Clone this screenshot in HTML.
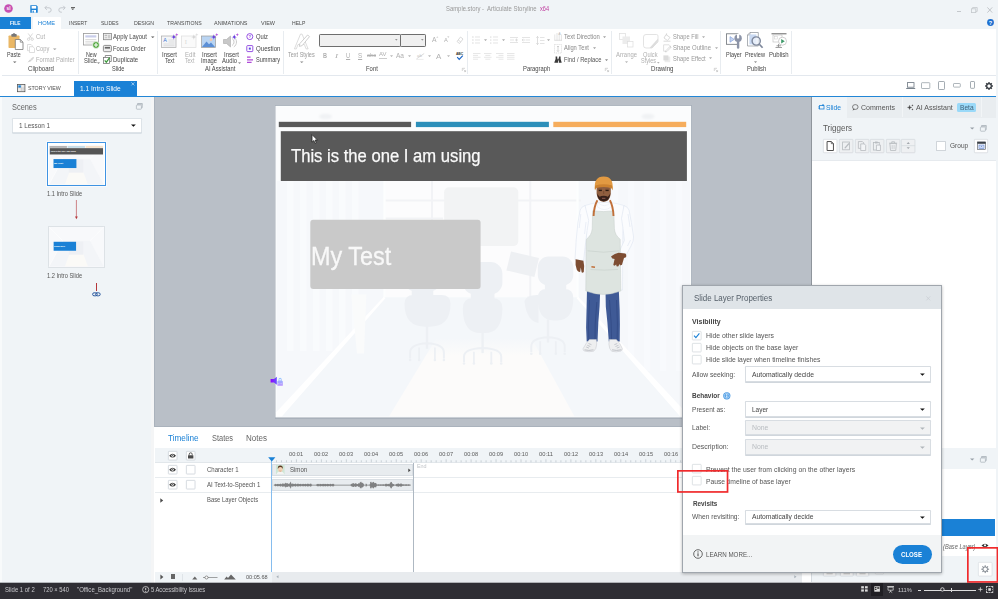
<!DOCTYPE html>
<html><head><meta charset="utf-8"><title>Sample.story - Articulate Storyline</title>
<style>
*{box-sizing:border-box;margin:0;padding:0}
html,body{width:998px;height:599px;overflow:hidden;background:#fff}
body{position:relative;font-family:"Liberation Sans",sans-serif;font-size:6.6px;color:#555;line-height:1}
.a{position:absolute}
.t{position:absolute;white-space:nowrap;line-height:1;transform-origin:0 50%}
svg{overflow:visible}
</style></head><body>
<div class="a" style="left:0px;top:0px;width:998px;height:28.5px;background:#f0f4f7;"></div>
<div class="a" style="left:0px;top:28.5px;width:996px;height:46.5px;background:#fff;"></div>
<div class="a" style="left:2px;top:75px;width:994px;height:1px;background:#e3e8ee;"></div>
<div class="a" style="left:0px;top:76px;width:996px;height:20px;background:#fff;"></div>
<div class="a" style="left:996px;top:28px;width:2px;height:555px;background:#f0f4f7;"></div>
<div class="a" style="left:0px;top:95.6px;width:996px;height:1.5px;background:#2286d6;"></div>
<div class="a" style="left:0px;top:97.1px;width:151px;height:486px;background:#f0f4f7;"></div>
<div class="a" style="left:151px;top:97.1px;width:3.3px;height:486px;background:#f4f5f6;"></div>
<div class="a" style="left:154.3px;top:97.1px;width:657.2px;height:329.6px;background:#aab2bc;"></div>
<div class="a" style="left:155.3px;top:97.1px;width:656.2px;height:328.6px;background:#b9bfc7;"></div>
<div class="a" style="left:154.5px;top:426.7px;width:657px;height:156px;background:#fff;"></div>
<div class="a" style="left:811.5px;top:97.2px;width:184.5px;height:486px;background:#fff;"></div>
<div class="a" style="left:0px;top:583px;width:998px;height:16px;background:#2f2e34;"></div>
<svg class="a" style="left:4px;top:4px;" width="9" height="9" viewBox="0 0 9 9"><circle cx="4.5" cy="4.5" r="4.3" fill="#c650b2"/><text x="4.5" y="6.3" font-size="4.6" fill="#fff" text-anchor="middle" font-family="Liberation Sans,sans-serif" font-weight="bold">sl</text></svg>
<svg class="a" style="left:30px;top:4.5px;" width="8" height="8" viewBox="0 0 8 8"><path d="M0.3 0.3h6.2l1.2 1.2v6.2h-7.4z" fill="#1a81d6"/><rect x="1.6" y="1" width="4.6" height="2.6" fill="#fff"/><rect x="1.8" y="5" width="4.2" height="2.7" fill="#fff"/><rect x="2.6" y="5.6" width="1.2" height="2.1" fill="#1a81d6"/></svg>
<svg class="a" style="left:44px;top:5px;" width="8" height="8" viewBox="0 0 8 8"><path d="M1 2.8 H5 A2.2 2.2 0 0 1 5 7.2 H4.2" fill="none" stroke="#bfc4c9" stroke-width="0.9"/><path d="M2.8 0.8 L0.8 2.8 L2.8 4.8" fill="none" stroke="#bfc4c9" stroke-width="0.9"/></svg>
<svg class="a" style="left:57.5px;top:5px;" width="8" height="8" viewBox="0 0 8 8"><path d="M7 2.8 H3 A2.2 2.2 0 0 0 3 7.2 H3.8" fill="none" stroke="#bfc4c9" stroke-width="0.9"/><path d="M5.2 0.8 L7.2 2.8 L5.2 4.8" fill="none" stroke="#bfc4c9" stroke-width="0.9"/></svg>
<div class="a" style="left:71.3px;top:6.7px;width:3.4px;height:0.7px;background:#666;"></div>
<svg class="a" style="left:71.24px;top:8.180000000000001px;" width="3.5200000000000005" height="2.2399999999999998" viewBox="0 0 3.5200000000000005 2.2399999999999998"><path d="M0 0.44799999999999995 L3.5200000000000005 0.44799999999999995 L1.7600000000000002 2.016 Z" fill="#555"/></svg>
<span class="t" style="left:446.00px;top:5.78px;font-size:6.4px;color:#999;transform:scaleX(0.9210);">Sample.story -</span>
<span class="t" style="left:487.00px;top:5.78px;font-size:6.4px;color:#999;transform:scaleX(0.9314);">Articulate Storyline</span>
<span class="t" style="left:540.00px;top:5.78px;font-size:6.4px;color:#c040a0;transform:scaleX(0.8722);">x64</span>
<div class="a" style="left:956.5px;top:11.2px;width:4.5px;height:0.8px;background:#c4c8cc;"></div>
<svg class="a" style="left:970.5px;top:6.5px;" width="7" height="7" viewBox="0 0 7 7"><rect x="0.4" y="1.8" width="4.4" height="3.8" fill="none" stroke="#c4c8cc" stroke-width="0.8"/><path d="M1.6 1.8V0.5H6.2V4.4H4.8" fill="none" stroke="#c4c8cc" stroke-width="0.8"/></svg>
<svg class="a" style="left:986.5px;top:6.5px;" width="6" height="6" viewBox="0 0 6 6"><path d="M0.4 0.4L5.2 5.6M5.2 0.4L0.4 5.6" stroke="#bcc0c4" stroke-width="0.9"/></svg>
<svg class="a" style="left:987px;top:18.8px;" width="7" height="7" viewBox="0 0 7 7"><circle cx="3.5" cy="3.5" r="3.4" fill="#1d6fd0"/><text x="3.5" y="5.6" font-size="5.6" font-weight="bold" fill="#fff" text-anchor="middle" font-family="Liberation Sans,sans-serif">?</text></svg>
<div class="a" style="left:0px;top:17px;width:30.5px;height:11.5px;background:#1a81d6;"></div>
<span class="t" style="left:9.70px;top:20.81px;font-size:5.9px;color:#fff;font-weight:bold;transform:scaleX(0.8214);">FILE</span>
<div class="a" style="left:32.6px;top:17.3px;width:28.6px;height:11.5px;background:#fff;border-radius:1px 1px 0 0;"></div>
<span class="t" style="left:37.80px;top:20.81px;font-size:5.9px;color:#1a81d6;transform:scaleX(0.9717);">HOME</span>
<span class="t" style="left:69.00px;top:20.81px;font-size:5.9px;color:#4a4a4a;transform:scaleX(0.8454);">INSERT</span>
<span class="t" style="left:101.30px;top:20.81px;font-size:5.9px;color:#4a4a4a;transform:scaleX(0.8433);">SLIDES</span>
<span class="t" style="left:134.00px;top:20.81px;font-size:5.9px;color:#4a4a4a;transform:scaleX(0.8930);">DESIGN</span>
<span class="t" style="left:166.70px;top:20.81px;font-size:5.9px;color:#4a4a4a;transform:scaleX(0.8774);">TRANSITIONS</span>
<span class="t" style="left:213.50px;top:20.81px;font-size:5.9px;color:#4a4a4a;transform:scaleX(0.9235);">ANIMATIONS</span>
<span class="t" style="left:261.30px;top:20.81px;font-size:5.9px;color:#4a4a4a;transform:scaleX(0.9285);">VIEW</span>
<span class="t" style="left:291.50px;top:20.81px;font-size:5.9px;color:#4a4a4a;transform:scaleX(0.8629);">HELP</span>
<div class="a" style="left:77.7px;top:31px;width:0.8px;height:42.5px;background:#e8ecf0;"></div>
<div class="a" style="left:156.5px;top:31px;width:0.8px;height:42.5px;background:#e8ecf0;"></div>
<div class="a" style="left:283px;top:31px;width:0.8px;height:42.5px;background:#e8ecf0;"></div>
<div class="a" style="left:466.7px;top:31px;width:0.8px;height:42.5px;background:#e8ecf0;"></div>
<div class="a" style="left:610.8px;top:31px;width:0.8px;height:42.5px;background:#e8ecf0;"></div>
<div class="a" style="left:720px;top:31px;width:0.8px;height:42.5px;background:#e8ecf0;"></div>
<div class="a" style="left:791.3px;top:31px;width:0.8px;height:42.5px;background:#e8ecf0;"></div>
<span class="t" style="left:28.00px;top:66.47px;font-size:6.3px;color:#464646;transform:scaleX(0.9641);">Clipboard</span>
<span class="t" style="left:111.80px;top:66.47px;font-size:6.3px;color:#464646;transform:scaleX(0.8922);">Slide</span>
<span class="t" style="left:205.30px;top:66.47px;font-size:6.3px;color:#464646;transform:scaleX(0.9266);">AI Assistant</span>
<span class="t" style="left:366.20px;top:66.47px;font-size:6.3px;color:#464646;transform:scaleX(0.9360);">Font</span>
<span class="t" style="left:522.50px;top:66.47px;font-size:6.3px;color:#464646;transform:scaleX(0.9279);">Paragraph</span>
<span class="t" style="left:651.30px;top:66.47px;font-size:6.3px;color:#464646;transform:scaleX(0.9736);">Drawing</span>
<span class="t" style="left:747.00px;top:66.47px;font-size:6.3px;color:#464646;transform:scaleX(0.9340);">Publish</span>
<svg class="a" style="left:461.5px;top:68px;" width="4" height="4" viewBox="0 0 4 4"><path d="M0.3 3V0.3H3" fill="none" stroke="#bbb" stroke-width="0.6"/><path d="M1.5 1.5L3.6 3.6M3.6 2V3.6H2" fill="none" stroke="#bbb" stroke-width="0.6"/></svg>
<svg class="a" style="left:605px;top:68px;" width="4" height="4" viewBox="0 0 4 4"><path d="M0.3 3V0.3H3" fill="none" stroke="#bbb" stroke-width="0.6"/><path d="M1.5 1.5L3.6 3.6M3.6 2V3.6H2" fill="none" stroke="#bbb" stroke-width="0.6"/></svg>
<svg class="a" style="left:714px;top:68px;" width="4" height="4" viewBox="0 0 4 4"><path d="M0.3 3V0.3H3" fill="none" stroke="#bbb" stroke-width="0.6"/><path d="M1.5 1.5L3.6 3.6M3.6 2V3.6H2" fill="none" stroke="#bbb" stroke-width="0.6"/></svg>
<svg class="a" style="left:7.5px;top:32.5px;" width="16" height="17" viewBox="0 0 16 17"><rect x="0.5" y="2.5" width="11" height="12.5" rx="0.8" fill="#eab765"/><rect x="3.3" y="1" width="5.4" height="2.8" rx="0.7" fill="#777"/><rect x="4.8" y="0.2" width="2.4" height="1.6" rx="0.8" fill="#777"/><path d="M7.3 6.5h5l2.7 2.7v7.3h-7.7z" fill="#fff" stroke="#777" stroke-width="0.8"/><path d="M12.3 6.5v2.7h2.7" fill="none" stroke="#777" stroke-width="0.7"/></svg>
<span class="t" style="left:7.30px;top:52.07px;font-size:6.3px;color:#464646;transform:scaleX(0.8504);">Paste</span>
<svg class="a" style="left:12.540000000000001px;top:61.18px;" width="3.5200000000000005" height="2.2399999999999998" viewBox="0 0 3.5200000000000005 2.2399999999999998"><path d="M0 0.44799999999999995 L3.5200000000000005 0.44799999999999995 L1.7600000000000002 2.016 Z" fill="#666"/></svg>
<svg class="a" style="left:26.5px;top:33px;" width="7" height="8" viewBox="0 0 7 8"><path d="M1.2 0.5L4.6 5.2M5.6 0.5L2.2 5.2" stroke="#c8c8c8" stroke-width="0.7" fill="none"/><circle cx="1.6" cy="6.2" r="1.2" fill="none" stroke="#c8c8c8" stroke-width="0.7"/><circle cx="5.2" cy="6.2" r="1.2" fill="none" stroke="#c8c8c8" stroke-width="0.7"/></svg>
<span class="t" style="left:36.00px;top:34.27px;font-size:6.3px;color:#b0b0b0;transform:scaleX(0.9180);">Cut</span>
<svg class="a" style="left:26.5px;top:44px;" width="8" height="9" viewBox="0 0 8 9"><path d="M0.5 0.5h3.6l1.6 1.6v4.6h-5.2z" fill="#fff" stroke="#d0d0d0" stroke-width="0.7"/><path d="M2.5 2.7h3.4l1.6 1.6v4.2h-5z" fill="#fff" stroke="#d0d0d0" stroke-width="0.7"/></svg>
<span class="t" style="left:36.00px;top:45.87px;font-size:6.3px;color:#b0b0b0;transform:scaleX(0.9043);">Copy</span>
<svg class="a" style="left:52.54px;top:47.580000000000005px;" width="3.5200000000000005" height="2.2399999999999998" viewBox="0 0 3.5200000000000005 2.2399999999999998"><path d="M0 0.44799999999999995 L3.5200000000000005 0.44799999999999995 L1.7600000000000002 2.016 Z" fill="#999"/></svg>
<svg class="a" style="left:27px;top:55.5px;" width="8" height="8" viewBox="0 0 8 8"><path d="M0.5 6.5L3 3.5L4.5 5z" fill="#ccc"/><path d="M3.2 3.2L6.2 0.8L7.2 1.8L4.8 4.8z" fill="#d8d8d8"/></svg>
<span class="t" style="left:36.00px;top:56.87px;font-size:6.3px;color:#b0b0b0;transform:scaleX(0.9264);">Format Painter</span>
<svg class="a" style="left:83px;top:32.5px;" width="17" height="16" viewBox="0 0 17 16"><rect x="0.4" y="0.4" width="15" height="11.6" fill="#fff" stroke="#999" stroke-width="0.8"/><rect x="2.3" y="2.3" width="11" height="2.2" fill="#c9cdea"/><path d="M2.3 6.5h11M2.3 8.3h11M2.3 10h11" stroke="#c4c4c4" stroke-width="0.6"/><circle cx="13" cy="12" r="3.4" fill="#4ea53a" stroke="#fff" stroke-width="0.7"/><path d="M13 10v4M11 12h4" stroke="#fff" stroke-width="1.1"/></svg>
<span class="t" style="left:86.30px;top:52.07px;font-size:6.3px;color:#464646;transform:scaleX(0.8490);">New</span>
<span class="t" style="left:83.50px;top:57.97px;font-size:6.3px;color:#464646;transform:scaleX(0.9279);">Slide</span>
<svg class="a" style="left:97.25999999999999px;top:61.52px;" width="3.08" height="1.9599999999999997" viewBox="0 0 3.08 1.9599999999999997"><path d="M0 0.39199999999999996 L3.08 0.39199999999999996 L1.54 1.7639999999999998 Z" fill="#666"/></svg>
<svg class="a" style="left:103px;top:33px;" width="9" height="7.5" viewBox="0 0 9 7.5"><rect x="0.4" y="0.4" width="8" height="6.3" fill="#f4f4f4" stroke="#888" stroke-width="0.8"/><rect x="1.6" y="1.7" width="2.6" height="1.5" fill="#bbb"/><rect x="4.8" y="1.7" width="2.6" height="3.7" fill="#ccc"/><rect x="1.6" y="3.9" width="2.6" height="1.5" fill="#ccc"/></svg>
<span class="t" style="left:113.30px;top:34.27px;font-size:6.3px;color:#464646;transform:scaleX(0.9334);">Apply Layout</span>
<svg class="a" style="left:150.74px;top:35.580000000000005px;" width="3.5200000000000005" height="2.2399999999999998" viewBox="0 0 3.5200000000000005 2.2399999999999998"><path d="M0 0.44799999999999995 L3.5200000000000005 0.44799999999999995 L1.7600000000000002 2.016 Z" fill="#555"/></svg>
<svg class="a" style="left:103px;top:44.5px;" width="9" height="7.5" viewBox="0 0 9 7.5"><rect x="0.4" y="0.4" width="8" height="6.3" rx="1.2" fill="#eee" stroke="#777" stroke-width="0.8"/><rect x="1.8" y="1.9" width="5.2" height="1.7" fill="#666"/></svg>
<span class="t" style="left:113.30px;top:45.87px;font-size:6.3px;color:#464646;transform:scaleX(0.9340);">Focus Order</span>
<svg class="a" style="left:103px;top:55px;" width="9" height="9" viewBox="0 0 9 9"><rect x="0.4" y="2.4" width="6" height="6" fill="#fff" stroke="#777" stroke-width="0.8"/><path d="M2.3 2.2V0.5h6v6H6.6" fill="none" stroke="#777" stroke-width="0.8"/><path d="M1.7 5.4l1.6 1.8l3.4-4.6" fill="none" stroke="#3b9a3b" stroke-width="1.2"/></svg>
<span class="t" style="left:113.30px;top:56.87px;font-size:6.3px;color:#464646;transform:scaleX(0.9594);">Duplicate</span>
<svg class="a" style="left:161px;top:33px;" width="18" height="16" viewBox="0 0 18 16"><rect x="0.5" y="3" width="14.5" height="11.5" fill="#f4f5f7" stroke="#aaa" stroke-width="0.7"/><text x="2.2" y="9" font-size="5.4" fill="#3a6fd0" font-family="Liberation Sans,sans-serif">A</text><path d="M7.5 7h6M7.5 9h6M2.5 11h11M2.5 12.8h11" stroke="#ccc" stroke-width="0.6"/><path d="M12.8 0.8999999999999999Q12.8 4 15.9 4Q12.8 4 12.8 7.1Q12.8 4 9.700000000000001 4Q12.8 4 12.8 0.8999999999999999Z" fill="#6a3fe0"/><path d="M15.8 0.09999999999999987Q15.8 1.7 17.400000000000002 1.7Q15.8 1.7 15.8 3.3Q15.8 1.7 14.200000000000001 1.7Q15.8 1.7 15.8 0.09999999999999987Z" fill="#b04bd8"/></svg>
<span class="t" style="left:162.00px;top:52.07px;font-size:6.3px;color:#464646;transform:scaleX(0.9520);">Insert</span>
<span class="t" style="left:165.00px;top:57.97px;font-size:6.3px;color:#464646;transform:scaleX(0.8049);">Text</span>
<svg class="a" style="left:181px;top:33px;" width="18" height="16" viewBox="0 0 18 16"><rect x="0.5" y="3" width="14.5" height="11.5" fill="#fafafa" stroke="#ddd" stroke-width="0.7"/><text x="3.8" y="11" font-size="6.5" fill="#d8d8d8" font-family="Liberation Serif,serif">I</text><path d="M12.8 0.8999999999999999Q12.8 4 15.9 4Q12.8 4 12.8 7.1Q12.8 4 9.700000000000001 4Q12.8 4 12.8 0.8999999999999999Z" fill="#d5d5d5"/><path d="M15.8 0.09999999999999987Q15.8 1.7 17.400000000000002 1.7Q15.8 1.7 15.8 3.3Q15.8 1.7 14.200000000000001 1.7Q15.8 1.7 15.8 0.09999999999999987Z" fill="#ddd"/></svg>
<span class="t" style="left:184.50px;top:52.07px;font-size:6.3px;color:#b0b0b0;transform:scaleX(0.9672);">Edit</span>
<span class="t" style="left:184.70px;top:57.97px;font-size:6.3px;color:#b0b0b0;transform:scaleX(0.8049);">Text</span>
<svg class="a" style="left:201px;top:33px;" width="18" height="16" viewBox="0 0 18 16"><rect x="0.5" y="3" width="14" height="11.5" fill="#b9d4f2" stroke="#999" stroke-width="0.7"/><path d="M1 14L5.5 8.5L8 11.2L10 9.5L14 14z" fill="#5b8fd6"/><circle cx="10" cy="6.8" r="1.3" fill="#f6c9a8"/><path d="M12.8 0.8999999999999999Q12.8 4 15.9 4Q12.8 4 12.8 7.1Q12.8 4 9.700000000000001 4Q12.8 4 12.8 0.8999999999999999Z" fill="#6a3fe0"/><path d="M15.8 0.09999999999999987Q15.8 1.7 17.400000000000002 1.7Q15.8 1.7 15.8 3.3Q15.8 1.7 14.200000000000001 1.7Q15.8 1.7 15.8 0.09999999999999987Z" fill="#b04bd8"/></svg>
<span class="t" style="left:201.70px;top:52.07px;font-size:6.3px;color:#464646;transform:scaleX(0.9520);">Insert</span>
<span class="t" style="left:201.00px;top:57.97px;font-size:6.3px;color:#464646;transform:scaleX(0.9138);">Image</span>
<svg class="a" style="left:222px;top:33px;" width="18" height="16" viewBox="0 0 18 16"><path d="M1.5 6.5h3l4-3.5v11l-4-3.5h-3z" fill="#c8c8c8" stroke="#aaa" stroke-width="0.6"/><path d="M10 5.5a4 4 0 0 1 0 7M11.8 4a6 6 0 0 1 0 10" fill="none" stroke="#c4c4c4" stroke-width="0.9"/><path d="M12.3 0.8999999999999999Q12.3 4 15.4 4Q12.3 4 12.3 7.1Q12.3 4 9.200000000000001 4Q12.3 4 12.3 0.8999999999999999Z" fill="#6a3fe0"/><path d="M15.3 0.09999999999999987Q15.3 1.7 16.900000000000002 1.7Q15.3 1.7 15.3 3.3Q15.3 1.7 13.700000000000001 1.7Q15.3 1.7 15.3 0.09999999999999987Z" fill="#b04bd8"/></svg>
<span class="t" style="left:223.50px;top:52.07px;font-size:6.3px;color:#464646;transform:scaleX(0.9520);">Insert</span>
<span class="t" style="left:221.70px;top:57.97px;font-size:6.3px;color:#464646;transform:scaleX(0.9309);">Audio</span>
<svg class="a" style="left:238.46px;top:61.720000000000006px;" width="3.08" height="1.9599999999999997" viewBox="0 0 3.08 1.9599999999999997"><path d="M0 0.39199999999999996 L3.08 0.39199999999999996 L1.54 1.7639999999999998 Z" fill="#666"/></svg>
<svg class="a" style="left:246px;top:33px;" width="8" height="8" viewBox="0 0 8 8"><circle cx="3.8" cy="3.6" r="3" fill="none" stroke="#8a3ee0" stroke-width="0.9"/><text x="3.8" y="5.2" font-size="4.2" font-weight="bold" fill="#8a3ee0" text-anchor="middle" font-family="Liberation Sans,sans-serif">?</text></svg>
<span class="t" style="left:255.50px;top:34.27px;font-size:6.3px;color:#464646;transform:scaleX(0.9264);">Quiz</span>
<svg class="a" style="left:246px;top:44.5px;" width="8" height="8" viewBox="0 0 8 8"><rect x="0.8" y="0.6" width="6" height="6" rx="0.8" fill="none" stroke="#8a3ee0" stroke-width="0.9"/><rect x="2.8" y="2.6" width="2" height="2" fill="#5a4ae0"/></svg>
<span class="t" style="left:255.50px;top:45.87px;font-size:6.3px;color:#464646;transform:scaleX(0.9716);">Question</span>
<svg class="a" style="left:246px;top:55.5px;" width="8" height="8" viewBox="0 0 8 8"><path d="M1 1.2h3.6M1 3.8h6M1 6.4h4.6" stroke="#b04bd8" stroke-width="1.3"/></svg>
<span class="t" style="left:255.50px;top:56.87px;font-size:6.3px;color:#464646;transform:scaleX(0.8904);">Summary</span>
<svg class="a" style="left:293px;top:32.5px;" width="18" height="17" viewBox="0 0 18 17"><path d="M1.400 15.900L7.500 1.100h1.600l6 14.800h-2l-1.700-4.400H5L3.300 15.900z" fill="#fff" stroke="#cfcfcf" stroke-width="0.700"/><path d="M6.800 10.600L14.600 2l1.900 1.600l-7.300 9l-2.800 0.800z" fill="#fff" stroke="#c4c4c4" stroke-width="0.800" stroke-linejoin="round"/></svg>
<span class="t" style="left:288.30px;top:52.07px;font-size:6.3px;color:#999;transform:scaleX(0.8765);">Text Styles</span>
<svg class="a" style="left:300.24px;top:61.18px;" width="3.5200000000000005" height="2.2399999999999998" viewBox="0 0 3.5200000000000005 2.2399999999999998"><path d="M0 0.44799999999999995 L3.5200000000000005 0.44799999999999995 L1.7600000000000002 2.016 Z" fill="#888"/></svg>
<div class="a" style="left:319px;top:33.6px;width:81.5px;height:13px;background:#f0f0f0;border:1px solid #6e6e6e;border-radius:1.2px;"></div>
<div class="a" style="left:399.5px;top:33.6px;width:26.7px;height:13px;background:#f0f0f0;border:1px solid #6e6e6e;border-radius:1.2px;"></div>
<svg class="a" style="left:395.18px;top:39.459999999999994px;" width="2.64" height="1.68" viewBox="0 0 2.64 1.68"><path d="M0 0.336 L2.64 0.336 L1.32 1.512 Z" fill="#777"/></svg>
<svg class="a" style="left:421.18px;top:39.459999999999994px;" width="2.64" height="1.68" viewBox="0 0 2.64 1.68"><path d="M0 0.336 L2.64 0.336 L1.32 1.512 Z" fill="#777"/></svg>
<span class="t" style="left:431.50px;top:37.30px;font-size:6.5px;color:#b0b0b0;transform:scaleX(1.0379);">A</span>
<span class="t" style="left:443.50px;top:38.06px;font-size:5.6px;color:#b0b0b0;transform:scaleX(1.0173);">A</span>
<svg class="a" style="left:436px;top:36px;" width="3" height="3" viewBox="0 0 3 3"><path d="M0.2 1.6L1.3 0.4L2.4 1.6z" fill="#bbb"/></svg>
<svg class="a" style="left:447.3px;top:36px;" width="3" height="3" viewBox="0 0 3 3"><path d="M0.2 0.6L1.3 1.8L2.4 0.6z" fill="#bbb"/></svg>
<svg class="a" style="left:455.5px;top:36px;" width="8" height="8" viewBox="0 0 8 8"><path d="M1 5.5L4.5 1l2.5 2L3.5 7.5z" fill="none" stroke="#ccc" stroke-width="0.7"/><path d="M2.2 4l2.6 2" stroke="#ccc" stroke-width="0.7"/></svg>
<span class="t" style="left:322.70px;top:52.97px;font-size:6.3px;color:#b0b0b0;font-weight:bold;transform:scaleX(0.8792);">B</span>
<span class="t" style="left:335.00px;top:52.97px;font-size:6.3px;color:#b0b0b0;font-style:italic;transform:scaleX(1.4284);font-family:Liberation Serif,serif;">I</span>
<span class="t" style="left:345.80px;top:52.97px;font-size:6.3px;color:#b0b0b0;transform:scaleX(0.9231);text-decoration:underline;">U</span>
<span class="t" style="left:357.80px;top:52.97px;font-size:6.3px;color:#b0b0b0;transform:scaleX(0.9995);text-decoration:underline;">S</span>
<span class="t" style="left:367.00px;top:53.43px;font-size:5.4px;color:#b0b0b0;transform:scaleX(1.0337);text-decoration:line-through;">abc</span>
<span class="t" style="left:379.00px;top:52.40px;font-size:5.2px;color:#b0b0b0;transform:scaleX(1.1448);">AV</span>
<div class="a" style="left:379px;top:57.6px;width:7.5px;height:0.6px;background:#ccc;"></div>
<svg class="a" style="left:389.76px;top:54.720000000000006px;" width="3.08" height="1.9599999999999997" viewBox="0 0 3.08 1.9599999999999997"><path d="M0 0.39199999999999996 L3.08 0.39199999999999996 L1.54 1.7639999999999998 Z" fill="#999"/></svg>
<span class="t" style="left:396.30px;top:52.97px;font-size:6.3px;color:#b0b0b0;transform:scaleX(1.0381);">Aa</span>
<svg class="a" style="left:407.76px;top:54.720000000000006px;" width="3.08" height="1.9599999999999997" viewBox="0 0 3.08 1.9599999999999997"><path d="M0 0.39199999999999996 L3.08 0.39199999999999996 L1.54 1.7639999999999998 Z" fill="#999"/></svg>
<svg class="a" style="left:416px;top:52px;" width="9" height="8" viewBox="0 0 9 8"><text x="1" y="5" font-size="4.4" fill="#c4c4c4" font-family="Liberation Sans,sans-serif">ab</text><path d="M0.5 6.8L8.2 1.5" stroke="#ccc" stroke-width="0.7"/><path d="M0.5 7.4h7" stroke="#ddd" stroke-width="0.6"/></svg>
<svg class="a" style="left:428.46px;top:54.720000000000006px;" width="3.08" height="1.9599999999999997" viewBox="0 0 3.08 1.9599999999999997"><path d="M0 0.39199999999999996 L3.08 0.39199999999999996 L1.54 1.7639999999999998 Z" fill="#999"/></svg>
<span class="t" style="left:436.00px;top:52.67px;font-size:7px;color:#b0b0b0;transform:scaleX(1.1351);">A</span>
<svg class="a" style="left:446.76px;top:54.720000000000006px;" width="3.08" height="1.9599999999999997" viewBox="0 0 3.08 1.9599999999999997"><path d="M0 0.39199999999999996 L3.08 0.39199999999999996 L1.54 1.7639999999999998 Z" fill="#999"/></svg>
<svg class="a" style="left:455.5px;top:50.5px;" width="8" height="10" viewBox="0 0 8 10"><text x="3.6" y="3.8" font-size="3.4" font-weight="bold" fill="#333" text-anchor="middle" font-family="Liberation Sans,sans-serif">ABC</text><path d="M1.2 6.2L3.2 8.4L6.8 4.6" fill="none" stroke="#1a66c8" stroke-width="1.2"/></svg>
<svg class="a" style="left:472px;top:36px;" width="9" height="9" viewBox="0 0 9 9"><path d="M0.3 1h1.2M0.3 4h1.2M0.3 7h1.2" stroke="#ccc" stroke-width="1"/><path d="M3 1h5M3 4h5M3 7h5" stroke="#d8d8d8" stroke-width="0.7"/></svg>
<svg class="a" style="left:483.96px;top:39.32px;" width="3.08" height="1.9599999999999997" viewBox="0 0 3.08 1.9599999999999997"><path d="M0 0.39199999999999996 L3.08 0.39199999999999996 L1.54 1.7639999999999998 Z" fill="#888"/></svg>
<svg class="a" style="left:490px;top:36px;" width="9" height="9" viewBox="0 0 9 9"><path d="M0.8 0.2v1.8M0.8 3.2v1.8M0.8 6.2v1.8" stroke="#ccc" stroke-width="0.6"/><path d="M3 1h5M3 4h5M3 7h5" stroke="#d8d8d8" stroke-width="0.7"/></svg>
<svg class="a" style="left:501.76px;top:39.32px;" width="3.08" height="1.9599999999999997" viewBox="0 0 3.08 1.9599999999999997"><path d="M0 0.39199999999999996 L3.08 0.39199999999999996 L1.54 1.7639999999999998 Z" fill="#888"/></svg>
<svg class="a" style="left:510px;top:37px;" width="9" height="7" viewBox="0 0 9 7"><path d="M0 0.5h8M0 5.5h8M0 3h4" stroke="#d8d8d8" stroke-width="0.7"/><path d="M5 3h3M6.5 1.5v3" stroke="#ccc" stroke-width="0.6"/></svg>
<svg class="a" style="left:522px;top:37px;" width="9" height="7" viewBox="0 0 9 7"><path d="M0 0.5h8M0 5.5h8M4 3h4" stroke="#d8d8d8" stroke-width="0.7"/><path d="M0 3h3.4M1.3 1.8L0.1 3L1.3 4.2" stroke="#ccc" stroke-width="0.6" fill="none"/></svg>
<svg class="a" style="left:535.5px;top:35.5px;" width="9" height="10" viewBox="0 0 9 10"><path d="M1.5 0.5v8M0.3 1.8L1.5 0.5L2.7 1.8M0.3 7.2L1.5 8.5L2.7 7.2" stroke="#c8c8c8" stroke-width="0.6" fill="none"/><path d="M4 1.5h4.5M4 4.5h4.5M4 7.5h4.5" stroke="#d8d8d8" stroke-width="0.7"/></svg>
<svg class="a" style="left:547.46px;top:39.32px;" width="3.08" height="1.9599999999999997" viewBox="0 0 3.08 1.9599999999999997"><path d="M0 0.39199999999999996 L3.08 0.39199999999999996 L1.54 1.7639999999999998 Z" fill="#888"/></svg>
<svg class="a" style="left:472.8px;top:52.5px;" width="8" height="7" viewBox="0 0 8 7"><path d="M0 0.5h7.5M0 2.4h5M0 4.3h7.5M0 6.2h5" stroke="#dcdcdc" stroke-width="0.7"/></svg>
<svg class="a" style="left:484.3px;top:52.5px;" width="8" height="7" viewBox="0 0 8 7"><path d="M0 0.5h7.5M1.3 2.4h5M0 4.3h7.5M1.3 6.2h5" stroke="#dcdcdc" stroke-width="0.7"/></svg>
<svg class="a" style="left:495.8px;top:52.5px;" width="8" height="7" viewBox="0 0 8 7"><path d="M0 0.5h7.5M2.5 2.4h5M0 4.3h7.5M2.5 6.2h5" stroke="#dcdcdc" stroke-width="0.7"/></svg>
<svg class="a" style="left:507.2px;top:52.5px;" width="8" height="7" viewBox="0 0 8 7"><path d="M0 0.5h7.5M0 2.4h7.5M0 4.3h7.5M0 6.2h7.5" stroke="#dcdcdc" stroke-width="0.7"/></svg>
<svg class="a" style="left:553.5px;top:32px;" width="9" height="9" viewBox="0 0 9 9"><path d="M0.8 8.5V2.5M3 8.5V1M5.2 8.5V1M7.4 8.5V2.5" stroke="#d0d0d0" stroke-width="0.6"/><path d="M0.5 8.3h7.4" stroke="#ccc" stroke-width="0.6"/><text x="4.6" y="3" font-size="3.3" fill="#bbb" font-family="Liberation Sans,sans-serif">A</text></svg>
<span class="t" style="left:563.80px;top:33.87px;font-size:6.3px;color:#888;transform:scaleX(0.9354);">Text Direction</span>
<svg class="a" style="left:602.96px;top:35.52px;" width="3.08" height="1.9599999999999997" viewBox="0 0 3.08 1.9599999999999997"><path d="M0 0.39199999999999996 L3.08 0.39199999999999996 L1.54 1.7639999999999998 Z" fill="#777"/></svg>
<svg class="a" style="left:553.5px;top:43.5px;" width="9" height="10" viewBox="0 0 9 10"><rect x="0.5" y="0.5" width="7" height="8.5" fill="none" stroke="#ccc" stroke-width="0.6" stroke-dasharray="1.2 0.8"/><path d="M4 2v5.5M3 3L4 2L5 3M3 6.5L4 7.5L5 6.5" stroke="#bbb" stroke-width="0.6" fill="none"/></svg>
<span class="t" style="left:563.80px;top:45.47px;font-size:6.3px;color:#888;transform:scaleX(0.9154);">Align Text</span>
<svg class="a" style="left:592.76px;top:47.32px;" width="3.08" height="1.9599999999999997" viewBox="0 0 3.08 1.9599999999999997"><path d="M0 0.39199999999999996 L3.08 0.39199999999999996 L1.54 1.7639999999999998 Z" fill="#777"/></svg>
<svg class="a" style="left:553.5px;top:55.5px;" width="9" height="8" viewBox="0 0 9 8"><path d="M1.6 0.6h1.6v2.6l0.6 0V1.8h0.6V3.2l0.6 0V0.6h1.6v2.4l1 3.2v0.6h-2.8V4.6h-0.8v2.2H0.4v-0.6l1.2-3.2z" fill="#3a3a3a"/></svg>
<span class="t" style="left:563.80px;top:57.07px;font-size:6.3px;color:#555;transform:scaleX(0.9232);">Find / Replace</span>
<svg class="a" style="left:604.76px;top:58.82px;" width="3.08" height="1.9599999999999997" viewBox="0 0 3.08 1.9599999999999997"><path d="M0 0.39199999999999996 L3.08 0.39199999999999996 L1.54 1.7639999999999998 Z" fill="#555"/></svg>
<svg class="a" style="left:618.5px;top:33px;" width="15" height="15" viewBox="0 0 15 15"><rect x="0.5" y="0.5" width="6" height="6" fill="#fff" stroke="#ddd" stroke-width="0.7"/><rect x="3.5" y="3.5" width="7.5" height="7.5" fill="#ececec"/><rect x="8.5" y="8.5" width="5.5" height="5.5" fill="#fff" stroke="#ddd" stroke-width="0.7"/></svg>
<span class="t" style="left:616.00px;top:52.07px;font-size:6.3px;color:#b0b0b0;transform:scaleX(0.9369);">Arrange</span>
<svg class="a" style="left:624.96px;top:61.32px;" width="3.08" height="1.9599999999999997" viewBox="0 0 3.08 1.9599999999999997"><path d="M0 0.39199999999999996 L3.08 0.39199999999999996 L1.54 1.7639999999999998 Z" fill="#999"/></svg>
<svg class="a" style="left:642.5px;top:33.5px;" width="16" height="15" viewBox="0 0 16 15"><path d="M3 0.5h10.5a1.5 1.5 0 0 1 1.5 1.5v6L9 14H3a2.5 2.5 0 0 1 -2.5 -2.5v-8.5A2.5 2.5 0 0 1 3 0.5z" fill="#fff" stroke="#dcdcdc" stroke-width="0.8"/><path d="M6.5 14L15 4.5L15.2 7L9.5 14z" fill="#ddd"/></svg>
<span class="t" style="left:643.00px;top:52.07px;font-size:6.3px;color:#b0b0b0;transform:scaleX(0.9004);">Quick</span>
<span class="t" style="left:641.00px;top:57.97px;font-size:6.3px;color:#b0b0b0;transform:scaleX(0.8743);">Styles</span>
<svg class="a" style="left:656.68px;top:61.86px;" width="2.64" height="1.68" viewBox="0 0 2.64 1.68"><path d="M0 0.336 L2.64 0.336 L1.32 1.512 Z" fill="#999"/></svg>
<svg class="a" style="left:662.5px;top:32.5px;" width="9" height="9" viewBox="0 0 9 9"><path d="M3 1.5L7 4.5L4.5 7.5L1 5z" fill="none" stroke="#ccc" stroke-width="0.7"/><path d="M3.6 0.2v2" stroke="#ccc" stroke-width="0.6"/><path d="M0.5 8.2h7" stroke="#e0e0e0" stroke-width="1.2"/></svg>
<span class="t" style="left:672.80px;top:34.47px;font-size:6.3px;color:#999;transform:scaleX(0.9102);">Shape Fill</span>
<svg class="a" style="left:702.46px;top:36.220000000000006px;" width="3.08" height="1.9599999999999997" viewBox="0 0 3.08 1.9599999999999997"><path d="M0 0.39199999999999996 L3.08 0.39199999999999996 L1.54 1.7639999999999998 Z" fill="#888"/></svg>
<svg class="a" style="left:662.5px;top:43.5px;" width="9" height="9" viewBox="0 0 9 9"><path d="M0.6 0.8h5.5l1.2 1.2v2" fill="none" stroke="#d4d4d4" stroke-width="0.7"/><path d="M0.6 0.8v6.4h2" fill="none" stroke="#d4d4d4" stroke-width="0.7"/><path d="M2.8 6.8L7.2 2.2l1 1L3.8 7.6l-1.4 0.4z" fill="none" stroke="#c4c4c4" stroke-width="0.6"/></svg>
<span class="t" style="left:672.80px;top:45.07px;font-size:6.3px;color:#999;transform:scaleX(0.9517);">Shape Outline</span>
<svg class="a" style="left:714.76px;top:46.620000000000005px;" width="3.08" height="1.9599999999999997" viewBox="0 0 3.08 1.9599999999999997"><path d="M0 0.39199999999999996 L3.08 0.39199999999999996 L1.54 1.7639999999999998 Z" fill="#888"/></svg>
<svg class="a" style="left:662.5px;top:54.5px;" width="9" height="9" viewBox="0 0 9 9"><rect x="1.6" y="1.6" width="5.6" height="5.6" fill="#ececec"/><rect x="0.4" y="0.4" width="5" height="5" fill="#dcdcdc"/></svg>
<span class="t" style="left:672.80px;top:55.87px;font-size:6.3px;color:#999;transform:scaleX(0.9093);">Shape Effect</span>
<svg class="a" style="left:709.1600000000001px;top:57.42px;" width="3.08" height="1.9599999999999997" viewBox="0 0 3.08 1.9599999999999997"><path d="M0 0.39199999999999996 L3.08 0.39199999999999996 L1.54 1.7639999999999998 Z" fill="#888"/></svg>
<svg class="a" style="left:726px;top:32.5px;" width="17" height="17" viewBox="0 0 17 17"><rect x="0.500" y="0.800" width="11.500" height="10.500" fill="#fff" stroke="#6d7278" stroke-width="0.800"/><path d="M4 3.600l4.200 2.800L4 9.200z" fill="#c4d4f0" stroke="#7d9bd8" stroke-width="0.600"/><circle cx="12.100" cy="5.300" r="3.700" fill="#8c94a8"/><rect x="11" y="0.800" width="2.200" height="4.600" fill="#fff"/><rect x="10.900" y="7.500" width="2.400" height="8.300" rx="1.200" fill="#8c94a8"/></svg>
<span class="t" style="left:725.80px;top:52.07px;font-size:6.3px;color:#464646;transform:scaleX(0.8792);">Player</span>
<svg class="a" style="left:746.5px;top:32px;" width="18" height="18" viewBox="0 0 18 18"><path d="M0.500 3L3 0.500h8.300v13.500H0.500z" fill="#fff" stroke="#8a8f96" stroke-width="0.700"/><path d="M0.500 3h2.500V0.500" fill="none" stroke="#8a8f96" stroke-width="0.600"/><rect x="2.400" y="2.400" width="7" height="10" fill="#c9d9f2"/><circle cx="9.200" cy="9" r="4.100" fill="#eef3fb" fill-opacity="0.750" stroke="#7d879b" stroke-width="1.400"/><path d="M12.300 12.200l3.300 3.600" stroke="#7d879b" stroke-width="1.700"/></svg>
<span class="t" style="left:745.30px;top:52.07px;font-size:6.3px;color:#464646;transform:scaleX(0.8925);">Preview</span>
<svg class="a" style="left:753.6600000000001px;top:61.02px;" width="3.08" height="1.9599999999999997" viewBox="0 0 3.08 1.9599999999999997"><path d="M0 0.39199999999999996 L3.08 0.39199999999999996 L1.54 1.7639999999999998 Z" fill="#666"/></svg>
<svg class="a" style="left:770.5px;top:32.5px;" width="18" height="17" viewBox="0 0 18 17"><path d="M0.5 0.8h15" stroke="#666" stroke-width="1"/><rect x="2" y="2" width="9" height="7" fill="#fff" stroke="#bbb" stroke-width="0.6"/><rect x="3.5" y="3.5" width="3" height="2.5" fill="none" stroke="#ccc" stroke-width="0.5"/><circle cx="11.5" cy="8.2" r="4" fill="#fff" stroke="#bbb" stroke-width="0.7"/><path d="M10.2 6l3.6 2.2l-3.6 2.2z" fill="#3f9a6a"/><path d="M7.5 11v3M4.5 14.5h6.5M5.5 12.8h4.5" stroke="#888" stroke-width="0.8"/></svg>
<span class="t" style="left:768.70px;top:52.07px;font-size:6.3px;color:#464646;transform:scaleX(0.9485);">Publish</span>
<svg class="a" style="left:16.5px;top:83.5px;" width="9" height="9" viewBox="0 0 9 9"><rect x="0.5" y="0.5" width="7.4" height="7.2" fill="#fff" stroke="#555" stroke-width="0.8"/><rect x="1.3" y="1.3" width="2.6" height="2.4" fill="#1a81d6"/><path d="M4.3 0.5v7.2M0.5 4.1h7.4M0.5 6h7.4M6.1 0.5v7.2" stroke="#999" stroke-width="0.4"/></svg>
<span class="t" style="left:28.00px;top:85.45px;font-size:6.2px;color:#4a4a4a;transform:scaleX(0.8474);">STORY VIEW</span>
<div class="a" style="left:74.3px;top:80.7px;width:62.3px;height:15.5px;background:#1a81d6;"></div>
<span class="t" style="left:80.00px;top:84.97px;font-size:7px;color:#fff;transform:scaleX(0.9423);">1.1 Intro Slide</span>
<svg class="a" style="left:130.8px;top:82.3px;" width="4" height="4" viewBox="0 0 4 4"><path d="M0.4 0.4l3 3M3.4 0.4l-3 3" stroke="#e8f2fc" stroke-width="0.6"/></svg>
<svg class="a" style="left:905.5px;top:81.5px;" width="10" height="8" viewBox="0 0 10 8"><rect x="1.4" y="0.6" width="6.6" height="4.6" fill="#fff" stroke="#6b7680" stroke-width="0.8"/><path d="M0.2 6h9v0.9h-9z" fill="#6b7680"/></svg>
<svg class="a" style="left:921px;top:81.5px;" width="10" height="8" viewBox="0 0 10 8"><rect x="0.5" y="0.7" width="8.3" height="5.8" rx="0.6" fill="#fff" stroke="#9aa3aa" stroke-width="0.8"/></svg>
<svg class="a" style="left:937.5px;top:80.8px;" width="8" height="10" viewBox="0 0 8 10"><rect x="0.5" y="0.5" width="6" height="8" rx="0.7" fill="#fff" stroke="#8d979e" stroke-width="0.8"/></svg>
<svg class="a" style="left:952.8px;top:82.8px;" width="9" height="6" viewBox="0 0 9 6"><rect x="0.5" y="0.5" width="6.8" height="3.6" rx="0.6" fill="#fff" stroke="#9aa3aa" stroke-width="0.8"/></svg>
<svg class="a" style="left:969.8px;top:81.3px;" width="6" height="9" viewBox="0 0 6 9"><rect x="0.5" y="0.5" width="4" height="6.8" rx="0.6" fill="#fff" stroke="#8d979e" stroke-width="0.8"/></svg>
<svg class="a" style="left:984.5px;top:81.5px;" width="8" height="8" viewBox="0 0 8 8"><g transform="translate(4,4)"><rect x="-0.75" y="-3.9" width="1.5" height="2" fill="#3a3f45" transform="rotate(0)"/><rect x="-0.75" y="-3.9" width="1.5" height="2" fill="#3a3f45" transform="rotate(45)"/><rect x="-0.75" y="-3.9" width="1.5" height="2" fill="#3a3f45" transform="rotate(90)"/><rect x="-0.75" y="-3.9" width="1.5" height="2" fill="#3a3f45" transform="rotate(135)"/><rect x="-0.75" y="-3.9" width="1.5" height="2" fill="#3a3f45" transform="rotate(180)"/><rect x="-0.75" y="-3.9" width="1.5" height="2" fill="#3a3f45" transform="rotate(225)"/><rect x="-0.75" y="-3.9" width="1.5" height="2" fill="#3a3f45" transform="rotate(270)"/><rect x="-0.75" y="-3.9" width="1.5" height="2" fill="#3a3f45" transform="rotate(315)"/><circle r="2.3" fill="none" stroke="#3a3f45" stroke-width="1.2"/></g></svg>
<div class="a" style="left:0px;top:97.2px;width:1.5px;height:485px;background:#f8fafb;"></div>
<span class="t" style="left:12.00px;top:104.06px;font-size:8.2px;color:#666;transform:scaleX(0.9031);">Scenes</span>
<svg class="a" style="left:135.5px;top:103.3px;" width="7" height="7" viewBox="0 0 7 7"><rect x="0.4" y="2" width="5" height="4.2" rx="0.6" fill="#f0f4f7" stroke="#a8b0b8" stroke-width="0.7"/><path d="M1.6 2V0.5H6.3V4.6H5.4" fill="none" stroke="#a8b0b8" stroke-width="0.7"/><path d="M1.6 1.1h4.7" stroke="#a8b0b8" stroke-width="0.9"/></svg>
<div class="a" style="left:12.3px;top:117.5px;width:130px;height:15.2px;background:#fff;border:1px solid #dde3e8;border-radius:1px;box-shadow:0 0.6px 0.6px rgba(150,165,180,.5);"></div>
<span class="t" style="left:19.20px;top:121.64px;font-size:7.4px;color:#555;transform:scaleX(0.8590);">1 Lesson 1</span>
<svg class="a" style="left:131.28px;top:124.16px;" width="4.840000000000001" height="3.08" viewBox="0 0 4.840000000000001 3.08"><path d="M0 0.6160000000000001 L4.840000000000001 0.6160000000000001 L2.4200000000000004 2.7720000000000002 Z" fill="#111"/></svg>
<div class="a" style="left:46.8px;top:142.1px;width:59.1px;height:44.1px;background:#fff;border:1.3px solid #3f93e2;box-shadow:0 0 0 0.7px #fbfdff;"></div>
<svg class="a" style="left:49px;top:144.5px;" width="54.7" height="39.5" viewBox="0 0 415 300"><rect width="415" height="300" fill="#f8f9fb"/><path d="M0 300L105 105H310L415 300Z" fill="#f3f5f8"/><path d="M120 300L175 150H240L295 300Z" fill="#fbfaf7"/><path d="M0 0L105 105M415 0L310 105M0 300L105 105" stroke="#fff" stroke-width="4" fill="none"/><rect x="150" y="110" width="110" height="100" fill="#eef0f4"/><rect x="4" y="12" width="132" height="6" fill="#555"/><rect x="141" y="12" width="132" height="6" fill="#7fb4cc"/><rect x="278" y="12" width="132" height="6" fill="#f3c48c"/><rect x="6" y="24" width="404" height="48" fill="#555"/><text x="14" y="53" font-size="15" font-weight="bold" fill="#f4f4f4" font-family="Liberation Sans,sans-serif" textLength="190" lengthAdjust="spacingAndGlyphs">This is the one I am using</text><rect x="34" y="107" width="174" height="68" fill="#1a81d6"/><text x="37" y="148" font-size="19" font-weight="bold" fill="#fff" font-family="Liberation Sans,sans-serif">My Test</text></svg>
<span class="t" style="left:46.90px;top:190.57px;font-size:6.3px;color:#555;transform:scaleX(0.9029);">1.1 Intro Slide</span>
<svg class="a" style="left:74px;top:200px;" width="5" height="20" viewBox="0 0 5 20"><path d="M2.4 0v17" stroke="#b5363a" stroke-width="0.6"/><path d="M1 16.6h2.8L2.4 19.2z" fill="#b5363a"/></svg>
<div class="a" style="left:48.2px;top:226px;width:56.8px;height:41.6px;background:#fafbfc;border:1px solid #dde2e6;"></div>
<svg class="a" style="left:49.2px;top:227px;" width="54.8" height="39.6" viewBox="0 0 415 300"><rect width="415" height="300" fill="#f8f9fb"/><path d="M0 300L105 105H310L415 300Z" fill="#f3f5f8"/><path d="M120 300L175 150H240L295 300Z" fill="#fbfaf7"/><path d="M0 0L105 105M415 0L310 105M0 300L105 105" stroke="#fff" stroke-width="4" fill="none"/><rect x="150" y="110" width="110" height="100" fill="#eef0f4"/><rect x="35" y="112" width="170" height="68" fill="#1a81d6"/><text x="38" y="152" font-size="16" font-weight="bold" fill="#fff" font-family="Liberation Sans,sans-serif">Show layer</text></svg>
<span class="t" style="left:46.90px;top:273.07px;font-size:6.3px;color:#555;transform:scaleX(0.9029);">1.2 Intro Slide</span>
<div class="a" style="left:96.2px;top:283px;width:0.6px;height:7.7px;background:#b5363a;"></div>
<svg class="a" style="left:92px;top:292px;" width="9" height="5" viewBox="0 0 9 5"><rect x="0.6" y="0.8" width="4.6" height="3" rx="1.5" fill="none" stroke="#2c5aa0" stroke-width="1"/><rect x="3.6" y="0.8" width="4.6" height="3" rx="1.5" fill="none" stroke="#2c5aa0" stroke-width="1"/></svg>
<div class="a" style="left:274.8px;top:105.4px;width:417.5px;height:313.2px;background:#a8b0ba;"></div>
<svg class="a" style="left:0px;top:0px;" width="998" height="599" viewBox="0 0 998 599"><defs><filter id="bl" x="-20%" y="-20%" width="140%" height="140%"><feGaussianBlur stdDeviation="1.1"/></filter><clipPath id="sc"><rect x="275.5" y="105.9" width="415.6" height="311.5"/></clipPath></defs><rect x="275.5" y="105.9" width="415.6" height="311.5" fill="#fdfefe"/><g clip-path="url(#sc)"><rect x="276.500" y="106.900" width="413.600" height="309.500" fill="#f6f8fb"/><rect x="276.500" y="106.900" width="413.600" height="74" fill="#fbfcfd"/><rect x="287" y="181" width="6.500" height="170" fill="#fafbfd" opacity="0.900"/><rect x="300" y="181" width="6.500" height="170" fill="#fafbfd" opacity="0.900"/><rect x="313" y="181" width="6.500" height="170" fill="#fafbfd" opacity="0.900"/><rect x="326" y="181" width="6.500" height="170" fill="#fafbfd" opacity="0.900"/><rect x="339" y="181" width="6.500" height="170" fill="#fafbfd" opacity="0.900"/><rect x="352" y="181" width="6.500" height="170" fill="#fafbfd" opacity="0.900"/><rect x="596" y="181" width="6.500" height="190" fill="#fafbfd" opacity="0.700"/><rect x="612" y="181" width="6.500" height="190" fill="#fafbfd" opacity="0.700"/><rect x="628" y="181" width="6.500" height="190" fill="#fafbfd" opacity="0.700"/><rect x="644" y="181" width="6.500" height="190" fill="#fafbfd" opacity="0.700"/><rect x="660" y="181" width="6.500" height="190" fill="#fafbfd" opacity="0.700"/><rect x="676" y="181" width="6.500" height="190" fill="#fafbfd" opacity="0.700"/><rect x="385" y="181" width="193" height="116.500" fill="#fcfcfd"/><path d="M432 181v60M530.300 181v116M385 200.500h196M385 218.500h58" stroke="#f2f3f6" stroke-width="2" fill="none"/><path d="M384.500 181v117M577.500 181v117" stroke="#fdfefe" stroke-width="2.400" fill="none"/><rect x="444.100" y="187.200" width="74.200" height="58.900" rx="5" fill="#f2f3f4"/><path d="M511 251.500l28 6.500l-4.600 19l-28-6.500z" fill="#eef0f3"/><path d="M276.500 416.500L384.500 297.500H577.500L685.500 416.500z" fill="#f4f7fa"/><linearGradient id="fl" x1="0" y1="0" x2="0" y2="1"><stop offset="0" stop-color="#fcfbfa" stop-opacity="0"/><stop offset="0.22" stop-color="#fcfbfa" stop-opacity="1"/></linearGradient><path d="M389 416.500L436.500 338H531.500L574.500 416.500z" fill="url(#fl)"/><path d="M276 412.500L276 416.500L281.800 416.500L385.600 298L383.600 297z" fill="#ffffff"/><path d="M686 412.500L686 416.500L680.200 416.500L576.400 298L578.400 297z" fill="#ffffff"/><path d="M351.300 294.500h15l-2.300 59h-7z" fill="#fafbfb"/><rect x="404.5" y="262.0" width="36.0" height="29.5" rx="10.8" fill="#edf0f4"/><rect x="411.7" y="287.2" width="21.6" height="10.8" fill="#edf0f4"/><path d="M404.5 304.1q0 -9.0 9.0 -9.0H441.5q9.0 0 9.0 9.0q0 22.7 -21.0 22.7h-4q-21.0 0 -21.0 -22.7z" fill="#edf0f4"/><rect x="425.8" y="325.8" width="2.4" height="23.0" fill="#edf0f4"/><path d="M410.1 358.4v-5.9q0 -8.4 16.9 -9.3q16.9 0.8 16.9 9.3v5.9" fill="none" stroke="#edf0f4" stroke-width="2"/><path d="M419.1 360.0v-12.6M434.9 360.0v-12.6" stroke="#edf0f4" stroke-width="1.8"/><circle cx="410.1" cy="360.0" r="1.3" fill="#edf0f4"/><circle cx="419.1" cy="360.0" r="1.3" fill="#edf0f4"/><circle cx="434.9" cy="360.0" r="1.3" fill="#edf0f4"/><circle cx="443.9" cy="360.0" r="1.3" fill="#edf0f4"/><rect x="462.9" y="262.0" width="39.5" height="32.4" rx="11.8" fill="#edf0f4"/><rect x="470.8" y="289.6" width="23.7" height="11.8" fill="#edf0f4"/><path d="M462.9 308.2q0 -9.9 9.9 -9.9H492.5q9.9 0 9.9 9.9q0 24.9 -17.8 24.9h-4q-17.8 0 -17.8 -24.9z" fill="#edf0f4"/><rect x="481.4" y="332.1" width="2.4" height="21.0" fill="#edf0f4"/><path d="M464.0 362.0v-5.5q0 -7.8 18.6 -8.6q18.6 0.8 18.6 8.6v5.5" fill="none" stroke="#edf0f4" stroke-width="2"/><path d="M473.9 363.5v-11.7M491.3 363.5v-11.7" stroke="#edf0f4" stroke-width="1.8"/><circle cx="464.0" cy="363.5" r="1.3" fill="#edf0f4"/><circle cx="473.9" cy="363.5" r="1.3" fill="#edf0f4"/><circle cx="491.3" cy="363.5" r="1.3" fill="#edf0f4"/><circle cx="501.2" cy="363.5" r="1.3" fill="#edf0f4"/><rect x="537.8" y="256.5" width="35.5" height="29.1" rx="10.7" fill="#edf0f4"/><rect x="544.9" y="281.4" width="21.3" height="10.7" fill="#edf0f4"/><path d="M537.8 298.0q0 -8.9 8.9 -8.9H564.4q8.9 0 8.9 8.9q0 22.4 -15.8 22.4h-4q-15.8 0 -15.8 -22.4z" fill="#edf0f4"/><rect x="546.8" y="319.4" width="2.4" height="23.2" fill="#edf0f4"/><path d="M531.3 352.1v-5.8q0 -8.3 16.7 -9.1q16.7 0.8 16.7 9.1v5.8" fill="none" stroke="#edf0f4" stroke-width="2"/><path d="M540.2 353.7v-12.5M555.8 353.7v-12.5" stroke="#edf0f4" stroke-width="1.8"/><circle cx="531.3" cy="353.7" r="1.3" fill="#edf0f4"/><circle cx="540.2" cy="353.7" r="1.3" fill="#edf0f4"/><circle cx="555.8" cy="353.7" r="1.3" fill="#edf0f4"/><circle cx="564.7" cy="353.7" r="1.3" fill="#edf0f4"/><path d="M524.500 301q2-6.500 14-6v28q-12-2-14-22z" fill="#edf0f4"/><ellipse cx="325.500" cy="116.500" rx="6.500" ry="2.800" fill="#f0f2f4" filter="url(#bl)"/><ellipse cx="648" cy="116.500" rx="6.500" ry="2.800" fill="#f0f2f4" filter="url(#bl)"/></g><rect x="278.800" y="121.800" width="132.300" height="5.300" fill="#595959"/><rect x="415.900" y="121.800" width="133" height="5.300" fill="#2c8fba"/><rect x="553.300" y="121.800" width="132.900" height="5.300" fill="#f6ad5c"/><rect x="280.800" y="131.200" width="406.100" height="49.800" fill="#595959"/><rect x="310.300" y="219.800" width="170.300" height="69.200" rx="3" fill="#c9c9c9"/><path d="M587 290h13.2l-0.6 16l-1.3 17l-0.800 18.500h-10.800l-0.600-14l0.400-16z" fill="#3f5a96"/><path d="M605.500 290h13.300l0.900 20l0.200 14l-0.200 17.500h-10.900l-1.400-19l-1.600-16z" fill="#3f5a96"/><path d="M589.500 300l-1 24l0.300 16M596.800 302l-1.600 22l-0.200 16M609.500 300l1.600 22l0.500 18M616.600 300l0.800 24l-0.300 16" stroke="#2e4580" stroke-width="0.800" fill="none" opacity="0.800"/><path d="M589.500 339.500h6.800l0.400 4.500q-0.400 5.500-3 7.200q-4.500 1.200-9.500-0.200q-1.600-1-1-2.600q2.800-5.400 6.300-8.900z" fill="#eeeff0" stroke="#c4c7cc" stroke-width="0.500"/><path d="M609.300 339.500h7q4 3.800 6 9q0.300 1.800-1.200 2.600q-5 1.400-9.400 0.200q-2.400-1.800-2.800-7z" fill="#eeeff0" stroke="#c4c7cc" stroke-width="0.500"/><path d="M584.500 349.800q4 1.200 9 0M612 349.800q4.600 1.200 9.400 0" stroke="#b4b8be" stroke-width="0.800" fill="none"/><path d="M588.500 343.500l3 1.200M587.300 345.300l3 1.200M586.200 347l2.800 1.100M617.300 343.500l-3 1.200M618.500 345.300l-3 1.200M619.600 347l-2.800 1.100" stroke="#a8adb5" stroke-width="0.600" fill="none"/><path d="M597.500 202.500q-7 1.300-12.500 3l-0.500 14.500l1.500 12l0.300 58h36.200l0.300-58l1.500-12l-0.500-14.500q-5.500-1.700-12.500-3z" fill="#fbfcfe" stroke="#dde4f0" stroke-width="0.500"/><path d="M585 205.500q-3.800 1.300-4.800 4.500l-2.300 12.500l-1.700 17.500l-1.200 19.600l8.600 1.500l1.700-15.600l1.800-15l1.600-10z" fill="#fbfcfe" stroke="#dde4f0" stroke-width="0.600"/><path d="M624 205.500q3.800 1.300 5 4.500l2.400 12.500l2.200 14.500q0.200 4-2.600 9l-5 9.200l-6.600-3.800l5-11l-1.400-12l-1.500-10z" fill="#fbfcfe" stroke="#dde4f0" stroke-width="0.600"/><path d="M580.800 214l-1.600 14M586 222l-1.400 12M628 214l2 13M630.500 240l-3 6" stroke="#e2e8f3" stroke-width="0.700" fill="none"/><path d="M597.500 202.300q6.800 6.800 13.500 0l0.300 4.500q-6.800 5.600-14.100 0z" fill="#fbfcfe" stroke="#e2e8f3" stroke-width="0.500"/><path d="M592.600 210.800q11 1.600 21.200 0l0.600 18q0.600 6.500 5.800 10.500l0.600 51.700q-17.500 6.800-35 0l0.600-51.700q5.200-4 5.800-10.500z" fill="#dde4e0" stroke="#c6cfca" stroke-width="0.500"/><path d="M587.500 250.800q16 2.800 32 0M590.500 269.500q14 1.200 27.500 0" stroke="#c6cfca" stroke-width="0.600" fill="none"/><rect x="591.400" y="266.300" width="3.600" height="1.500" fill="#c1703a" transform="rotate(8 593 267)"/><path d="M597.400 200.300q-3.400 6-3.800 15.700M609.900 200.300q3.200 6 3.600 15.700" stroke="#c1703a" stroke-width="1.900" fill="none"/><path d="M575.600 259.300l7.800 1.400q1.400 5.600 0.400 11.200q-1.400 1.400-2.200 0.300l-0.800-4.600l-0.600 4.200q-2.200 0.600-3.400-2q-1.800-5.200-1.200-10.500z" fill="#7d4d32"/><path d="M611 256.600q3-2.800 7.600-3.800l6.800 0.800q1.400 1.600 0.600 3.600l-2 0.800l-2 6.800l-1.600 0.600l-0.600-1.400l-1.700 2.400l-1.600-0.200l-0.300-1.800l-1.700 1.300l-1.200-0.800l1.300-5.800l-2.300-0.500z" fill="#7d4d32"/><path d="M596.600 187q0-3 7.100-3t7.100 3v6.500q-0.600 5.200-3.400 7.300q-3.700 1.800-7.400 0q-2.800-2.100-3.400-7.300z" fill="#8f5f40"/><path d="M597 193.300q0.800 5.400 3.400 7.300q3.300 1.600 6.600 0q2.600-1.900 3.400-7.300q-1.200 2.600-2.600 3.400q-1.600-1-4.100-1t-4.100 1q-1.400-0.800-2.600-3.400z" fill="#35201a"/><path d="M602 198.300h3.400" stroke="#a5685a" stroke-width="0.800"/><path d="M598.700 190.600h3.200M605.500 190.600h3.200" stroke="#24140d" stroke-width="1"/><path d="M598.500 189.300h3.400M605.400 189.300h3.400" stroke="#4a2c1c" stroke-width="0.500"/><path d="M603.700 191v3" stroke="#75492f" stroke-width="0.900"/><path d="M595 190q-1.800-13.600 8.700-13.600t8.700 13.600l-0.800-2.400q-7.900-2.200-15.800 0z" fill="#e29a42"/><path d="M595 190.400q-0.400-2.800 0.300-4.800q8.400-2.600 16.800 0q0.700 2 0.300 4.800q-0.500-1.800-1.200-2.400q-7.500-2-15 0q-0.700 0.600-1.200 2.400z" fill="#cc8230"/><path d="M312 134.600v7.600l1.800-1.600l1.300 2.700l1.200-0.600l-1.300-2.600h2.500z" fill="#fff" stroke="#222" stroke-width="0.800" stroke-linejoin="round"/><defs><linearGradient id="au" x1="0" y1="0" x2="1" y2="0"><stop offset="0" stop-color="#9200ff"/><stop offset="1" stop-color="#6452ff"/></linearGradient><linearGradient id="au2" x1="0" y1="0" x2="0" y2="1"><stop offset="0" stop-color="#86c2ff"/><stop offset="1" stop-color="#b68cff"/></linearGradient></defs><path d="M270.600 379h3.400l2.800-2.200v8l-2.800-2.200h-3.400z" fill="url(#au)"/><path d="M277.400 385.800v-4.600l1.200-0.600v-1.400a1.500 1.500 0 0 1 3 0v1.400l1.200 0.600v4.600z" fill="url(#au2)" opacity="0.950"/><path d="M279.400 380.400v-1a0.700 0.700 0 0 1 1.400 0v1z" fill="#f4f8fd"/><circle cx="278.700" cy="383.800" r="0.400" fill="#fff"/><circle cx="280.100" cy="383.800" r="0.400" fill="#fff"/><circle cx="281.500" cy="383.800" r="0.400" fill="#fff"/></svg>
<span class="t" style="left:290.80px;top:146.92px;font-size:18.4px;color:#fafafa;transform:scaleX(0.9048);-webkit-text-stroke:0.25px #fafafa;">This is the one I am using</span>
<span class="t" style="left:311.20px;top:243.80px;font-size:25.4px;color:#f8f8f8;transform:scaleX(0.9214);-webkit-text-stroke:0.3px #f8f8f8;">My Test</span>
<span class="t" style="left:168.00px;top:433.77px;font-size:8.9px;color:#1a81d6;transform:scaleX(0.9218);">Timeline</span>
<span class="t" style="left:211.60px;top:433.77px;font-size:8.9px;color:#666;transform:scaleX(0.8363);">States</span>
<span class="t" style="left:246.20px;top:433.77px;font-size:8.9px;color:#666;transform:scaleX(0.9032);">Notes</span>
<div class="a" style="left:154.5px;top:448.2px;width:657px;height:14.3px;background:#f0f4f7;"></div>
<div class="a" style="left:154.5px;top:462.3px;width:657px;height:0.7px;background:#e2e7eb;"></div>
<div class="a" style="left:154.5px;top:476.9px;width:657px;height:0.7px;background:#e8ecef;"></div>
<div class="a" style="left:154.5px;top:491.5px;width:657px;height:0.7px;background:#e8ecef;"></div>
<svg class="a" style="left:168.0px;top:451px;" width="9.4" height="9.4" viewBox="0 0 9.4 9.4"><rect x="0.35" y="0.35" width="8.700" height="8.700" rx="0.600" fill="#fff" stroke="#cdd3d9" stroke-width="0.800"/><path d="M1.2 4.700Q4.600 1 8 4.700Q4.600 8.400 1.200 4.700Z" fill="#383838"/><circle cx="4.600" cy="4.600" r="1.200" fill="#fff"/><circle cx="4.600" cy="4.600" r="0.500" fill="#383838"/></svg>
<svg class="a" style="left:186.2px;top:451px;" width="9.4" height="9.4" viewBox="0 0 9.4 9.4"><rect x="0.35" y="0.35" width="8.700" height="8.700" rx="0.600" fill="#fff" stroke="#cdd3d9" stroke-width="0.800"/><rect x="2" y="4.200" width="5.400" height="3.400" rx="0.300" fill="#4a4a4a"/><path d="M3.200 4.200V3.300a1.500 1.500 0 0 1 3 0V4.200" fill="none" stroke="#4a4a4a" stroke-width="0.900"/></svg>
<svg class="a" style="left:168.0px;top:465.2px;" width="9.4" height="9.4" viewBox="0 0 9.4 9.4"><rect x="0.35" y="0.35" width="8.700" height="8.700" rx="0.600" fill="#fff" stroke="#cdd3d9" stroke-width="0.800"/><path d="M1.2 4.700Q4.600 1 8 4.700Q4.600 8.400 1.200 4.700Z" fill="#383838"/><circle cx="4.600" cy="4.600" r="1.200" fill="#fff"/><circle cx="4.600" cy="4.600" r="0.500" fill="#383838"/></svg>
<svg class="a" style="left:186.2px;top:465.2px;" width="9.4" height="9.4" viewBox="0 0 9.4 9.4"><rect x="0.35" y="0.35" width="8.700" height="8.700" rx="0.600" fill="#fff" stroke="#cdd3d9" stroke-width="0.800"/></svg>
<svg class="a" style="left:168.0px;top:480px;" width="9.4" height="9.4" viewBox="0 0 9.4 9.4"><rect x="0.35" y="0.35" width="8.700" height="8.700" rx="0.600" fill="#fff" stroke="#cdd3d9" stroke-width="0.800"/><path d="M1.2 4.700Q4.600 1 8 4.700Q4.600 8.400 1.200 4.700Z" fill="#383838"/><circle cx="4.600" cy="4.600" r="1.200" fill="#fff"/><circle cx="4.600" cy="4.600" r="0.500" fill="#383838"/></svg>
<svg class="a" style="left:186.2px;top:480px;" width="9.4" height="9.4" viewBox="0 0 9.4 9.4"><rect x="0.35" y="0.35" width="8.700" height="8.700" rx="0.600" fill="#fff" stroke="#cdd3d9" stroke-width="0.800"/></svg>
<span class="t" style="left:207.10px;top:466.77px;font-size:6.3px;color:#555;transform:scaleX(0.9600);">Character 1</span>
<span class="t" style="left:207.10px;top:481.67px;font-size:6.3px;color:#555;transform:scaleX(0.9689);">AI Text-to-Speech 1</span>
<span class="t" style="left:207.10px;top:496.57px;font-size:6.3px;color:#555;transform:scaleX(0.9295);">Base Layer Objects</span>
<svg class="a" style="left:159.8px;top:497.6px;" width="4" height="5" viewBox="0 0 4 5"><path d="M0.300 0.200L3.200 2.500L0.300 4.800Z" fill="#4a4a4a"/></svg>
<span class="t" style="left:289.40px;top:451.57px;font-size:5.7px;color:#5a5a5a;transform:scaleX(0.9885);">00:01</span>
<span class="t" style="left:314.35px;top:451.57px;font-size:5.7px;color:#5a5a5a;transform:scaleX(0.9885);">00:02</span>
<span class="t" style="left:339.30px;top:451.57px;font-size:5.7px;color:#5a5a5a;transform:scaleX(0.9885);">00:03</span>
<span class="t" style="left:364.25px;top:451.57px;font-size:5.7px;color:#5a5a5a;transform:scaleX(0.9885);">00:04</span>
<span class="t" style="left:389.20px;top:451.57px;font-size:5.7px;color:#5a5a5a;transform:scaleX(0.9885);">00:05</span>
<span class="t" style="left:414.15px;top:451.57px;font-size:5.7px;color:#5a5a5a;transform:scaleX(0.9885);">00:06</span>
<span class="t" style="left:439.10px;top:451.57px;font-size:5.7px;color:#5a5a5a;transform:scaleX(0.9885);">00:07</span>
<span class="t" style="left:464.05px;top:451.57px;font-size:5.7px;color:#5a5a5a;transform:scaleX(0.9885);">00:08</span>
<span class="t" style="left:489.00px;top:451.57px;font-size:5.7px;color:#5a5a5a;transform:scaleX(0.9885);">00:09</span>
<span class="t" style="left:513.95px;top:451.57px;font-size:5.7px;color:#5a5a5a;transform:scaleX(0.9885);">00:10</span>
<span class="t" style="left:538.90px;top:451.57px;font-size:5.7px;color:#5a5a5a;transform:scaleX(1.0187);">00:11</span>
<span class="t" style="left:563.85px;top:451.57px;font-size:5.7px;color:#5a5a5a;transform:scaleX(0.9885);">00:12</span>
<span class="t" style="left:588.80px;top:451.57px;font-size:5.7px;color:#5a5a5a;transform:scaleX(0.9885);">00:13</span>
<span class="t" style="left:613.75px;top:451.57px;font-size:5.7px;color:#5a5a5a;transform:scaleX(0.9885);">00:14</span>
<span class="t" style="left:638.70px;top:451.57px;font-size:5.7px;color:#5a5a5a;transform:scaleX(0.9885);">00:15</span>
<span class="t" style="left:663.65px;top:451.57px;font-size:5.7px;color:#5a5a5a;transform:scaleX(0.9885);">00:16</span>
<svg class="a" style="left:0px;top:0px;" width="998" height="599" viewBox="0 0 998 599"><path d="M271.50 459.3v3.0" stroke="#b4bcc4" stroke-width="0.650"/><path d="M276.49 460.3v2.0" stroke="#b4bcc4" stroke-width="0.650"/><path d="M281.48 460.3v2.0" stroke="#b4bcc4" stroke-width="0.650"/><path d="M286.47 460.3v2.0" stroke="#b4bcc4" stroke-width="0.650"/><path d="M291.46 460.3v2.0" stroke="#b4bcc4" stroke-width="0.650"/><path d="M296.45 459.3v3.0" stroke="#b4bcc4" stroke-width="0.650"/><path d="M301.44 460.3v2.0" stroke="#b4bcc4" stroke-width="0.650"/><path d="M306.43 460.3v2.0" stroke="#b4bcc4" stroke-width="0.650"/><path d="M311.42 460.3v2.0" stroke="#b4bcc4" stroke-width="0.650"/><path d="M316.41 460.3v2.0" stroke="#b4bcc4" stroke-width="0.650"/><path d="M321.40 459.3v3.0" stroke="#b4bcc4" stroke-width="0.650"/><path d="M326.39 460.3v2.0" stroke="#b4bcc4" stroke-width="0.650"/><path d="M331.38 460.3v2.0" stroke="#b4bcc4" stroke-width="0.650"/><path d="M336.37 460.3v2.0" stroke="#b4bcc4" stroke-width="0.650"/><path d="M341.36 460.3v2.0" stroke="#b4bcc4" stroke-width="0.650"/><path d="M346.35 459.3v3.0" stroke="#b4bcc4" stroke-width="0.650"/><path d="M351.34 460.3v2.0" stroke="#b4bcc4" stroke-width="0.650"/><path d="M356.33 460.3v2.0" stroke="#b4bcc4" stroke-width="0.650"/><path d="M361.32 460.3v2.0" stroke="#b4bcc4" stroke-width="0.650"/><path d="M366.31 460.3v2.0" stroke="#b4bcc4" stroke-width="0.650"/><path d="M371.30 459.3v3.0" stroke="#b4bcc4" stroke-width="0.650"/><path d="M376.29 460.3v2.0" stroke="#b4bcc4" stroke-width="0.650"/><path d="M381.28 460.3v2.0" stroke="#b4bcc4" stroke-width="0.650"/><path d="M386.27 460.3v2.0" stroke="#b4bcc4" stroke-width="0.650"/><path d="M391.26 460.3v2.0" stroke="#b4bcc4" stroke-width="0.650"/><path d="M396.25 459.3v3.0" stroke="#b4bcc4" stroke-width="0.650"/><path d="M401.24 460.3v2.0" stroke="#b4bcc4" stroke-width="0.650"/><path d="M406.23 460.3v2.0" stroke="#b4bcc4" stroke-width="0.650"/><path d="M411.22 460.3v2.0" stroke="#b4bcc4" stroke-width="0.650"/><path d="M416.21 460.3v2.0" stroke="#b4bcc4" stroke-width="0.650"/><path d="M421.20 459.3v3.0" stroke="#b4bcc4" stroke-width="0.650"/><path d="M426.19 460.3v2.0" stroke="#b4bcc4" stroke-width="0.650"/><path d="M431.18 460.3v2.0" stroke="#b4bcc4" stroke-width="0.650"/><path d="M436.17 460.3v2.0" stroke="#b4bcc4" stroke-width="0.650"/><path d="M441.16 460.3v2.0" stroke="#b4bcc4" stroke-width="0.650"/><path d="M446.15 459.3v3.0" stroke="#b4bcc4" stroke-width="0.650"/><path d="M451.14 460.3v2.0" stroke="#b4bcc4" stroke-width="0.650"/><path d="M456.13 460.3v2.0" stroke="#b4bcc4" stroke-width="0.650"/><path d="M461.12 460.3v2.0" stroke="#b4bcc4" stroke-width="0.650"/><path d="M466.11 460.3v2.0" stroke="#b4bcc4" stroke-width="0.650"/><path d="M471.10 459.3v3.0" stroke="#b4bcc4" stroke-width="0.650"/><path d="M476.09 460.3v2.0" stroke="#b4bcc4" stroke-width="0.650"/><path d="M481.08 460.3v2.0" stroke="#b4bcc4" stroke-width="0.650"/><path d="M486.07 460.3v2.0" stroke="#b4bcc4" stroke-width="0.650"/><path d="M491.06 460.3v2.0" stroke="#b4bcc4" stroke-width="0.650"/><path d="M496.05 459.3v3.0" stroke="#b4bcc4" stroke-width="0.650"/><path d="M501.04 460.3v2.0" stroke="#b4bcc4" stroke-width="0.650"/><path d="M506.03 460.3v2.0" stroke="#b4bcc4" stroke-width="0.650"/><path d="M511.02 460.3v2.0" stroke="#b4bcc4" stroke-width="0.650"/><path d="M516.01 460.3v2.0" stroke="#b4bcc4" stroke-width="0.650"/><path d="M521.00 459.3v3.0" stroke="#b4bcc4" stroke-width="0.650"/><path d="M525.99 460.3v2.0" stroke="#b4bcc4" stroke-width="0.650"/><path d="M530.98 460.3v2.0" stroke="#b4bcc4" stroke-width="0.650"/><path d="M535.97 460.3v2.0" stroke="#b4bcc4" stroke-width="0.650"/><path d="M540.96 460.3v2.0" stroke="#b4bcc4" stroke-width="0.650"/><path d="M545.95 459.3v3.0" stroke="#b4bcc4" stroke-width="0.650"/><path d="M550.94 460.3v2.0" stroke="#b4bcc4" stroke-width="0.650"/><path d="M555.93 460.3v2.0" stroke="#b4bcc4" stroke-width="0.650"/><path d="M560.92 460.3v2.0" stroke="#b4bcc4" stroke-width="0.650"/><path d="M565.91 460.3v2.0" stroke="#b4bcc4" stroke-width="0.650"/><path d="M570.90 459.3v3.0" stroke="#b4bcc4" stroke-width="0.650"/><path d="M575.89 460.3v2.0" stroke="#b4bcc4" stroke-width="0.650"/><path d="M580.88 460.3v2.0" stroke="#b4bcc4" stroke-width="0.650"/><path d="M585.87 460.3v2.0" stroke="#b4bcc4" stroke-width="0.650"/><path d="M590.86 460.3v2.0" stroke="#b4bcc4" stroke-width="0.650"/><path d="M595.85 459.3v3.0" stroke="#b4bcc4" stroke-width="0.650"/><path d="M600.84 460.3v2.0" stroke="#b4bcc4" stroke-width="0.650"/><path d="M605.83 460.3v2.0" stroke="#b4bcc4" stroke-width="0.650"/><path d="M610.82 460.3v2.0" stroke="#b4bcc4" stroke-width="0.650"/><path d="M615.81 460.3v2.0" stroke="#b4bcc4" stroke-width="0.650"/><path d="M620.80 459.3v3.0" stroke="#b4bcc4" stroke-width="0.650"/><path d="M625.79 460.3v2.0" stroke="#b4bcc4" stroke-width="0.650"/><path d="M630.78 460.3v2.0" stroke="#b4bcc4" stroke-width="0.650"/><path d="M635.77 460.3v2.0" stroke="#b4bcc4" stroke-width="0.650"/><path d="M640.76 460.3v2.0" stroke="#b4bcc4" stroke-width="0.650"/><path d="M645.75 459.3v3.0" stroke="#b4bcc4" stroke-width="0.650"/><path d="M650.74 460.3v2.0" stroke="#b4bcc4" stroke-width="0.650"/><path d="M655.73 460.3v2.0" stroke="#b4bcc4" stroke-width="0.650"/><path d="M660.72 460.3v2.0" stroke="#b4bcc4" stroke-width="0.650"/><path d="M665.71 460.3v2.0" stroke="#b4bcc4" stroke-width="0.650"/><path d="M670.70 459.3v3.0" stroke="#b4bcc4" stroke-width="0.650"/><path d="M675.69 460.3v2.0" stroke="#b4bcc4" stroke-width="0.650"/><path d="M680.68 460.3v2.0" stroke="#b4bcc4" stroke-width="0.650"/></svg>
<div class="a" style="left:271.8px;top:463.7px;width:141.4px;height:12px;background:#e8ecef;border:0.7px solid #d9dee3;"></div>
<svg class="a" style="left:275.8px;top:465.1px;" width="9" height="9.5" viewBox="0 0 9 9.5"><rect x="0" y="0" width="8.600" height="9.200" fill="#cfe6d6"/><path d="M0.600 9.200q0.400-2.400 3.700-2.600q3.300 0.200 3.700 2.600z" fill="#f4f4f4"/><ellipse cx="4.300" cy="4.200" rx="2.300" ry="2.700" fill="#f3d2b6"/><path d="M1.800 4q-0.300-3.400 2.500-3.400t2.500 3.400q-0.600-1.800-2.500-1.900q-1.900 0.100-2.500 1.900z" fill="#5a3a22"/><path d="M3.300 5.800q1 0.700 2 0" stroke="#b06a50" stroke-width="0.400" fill="none"/></svg>
<span class="t" style="left:289.80px;top:466.77px;font-size:6.3px;color:#555;transform:scaleX(0.9576);">Simon</span>
<svg class="a" style="left:408px;top:468.3px;" width="3" height="5" viewBox="0 0 3 5"><path d="M0.300 0.400L2.600 2.300L0.300 4.200Z" fill="#444"/></svg>
<div class="a" style="left:271.8px;top:478.9px;width:141.4px;height:11.8px;background:#e8ecef;border:0.7px solid #d9dee3;"></div>
<svg class="a" style="left:0px;top:0px;" width="998" height="599" viewBox="0 0 998 599"><path d="M274.0 484.80v0.60M274.5 484.64v0.92M275.0 484.31v1.57M275.5 483.87v2.46M276.0 484.23v1.74M276.5 484.40v1.39M277.0 484.13v1.94M277.5 484.02v2.15M278.0 483.83v2.54M278.5 484.17v1.86M279.0 484.37v1.47M279.5 484.16v1.88M280.0 483.94v2.33M280.5 483.77v2.66M281.0 483.82v2.56M281.5 484.38v1.45M282.0 484.04v2.11M282.5 483.62v2.97M283.0 483.42v3.35M283.5 483.79v2.61M284.0 484.23v1.74M284.5 483.68v2.84M285.0 483.76v2.67M285.5 482.84v4.52M286.0 483.10v4.00M286.5 483.53v3.15M287.0 483.39v3.42M287.5 483.34v3.51M288.0 483.58v3.03M288.5 483.94v2.32M289.0 484.11v1.98M289.5 483.70v2.80M290.0 483.07v4.07M290.5 481.88v6.43M291.0 482.85v4.49M291.5 484.02v2.17M292.0 484.05v2.09M292.5 483.62v2.96M293.0 483.70v2.80M293.5 483.95v2.30M294.0 484.23v1.74M294.5 484.07v2.06M295.0 483.89v2.42M295.5 483.67v2.86M296.0 483.91v2.38M296.5 484.36v1.47M297.0 484.10v1.99M297.5 483.87v2.46M298.0 483.69v2.82M298.5 483.92v2.36M299.0 484.36v1.48M299.5 484.02v2.15M300.0 484.05v2.10M300.5 483.89v2.42M301.0 483.93v2.33M301.5 484.40v1.39M302.0 484.19v1.81M302.5 484.11v1.98M303.0 483.83v2.54M303.5 483.95v2.29M304.0 484.32v1.57M304.5 484.11v1.98M305.0 484.02v2.16M305.5 483.81v2.58M306.0 483.98v2.24M306.5 484.28v1.64M307.0 484.21v1.79M307.5 483.81v2.58M308.0 483.68v2.84M308.5 483.98v2.23M309.0 484.23v1.74M309.5 484.30v1.60M310.0 483.83v2.54M310.5 483.75v2.70M311.0 483.76v2.67M311.5 484.40v1.40M312.0 484.68v0.85M312.5 484.80v0.60M313.0 484.80v0.60M313.5 484.80v0.60M314.0 484.80v0.60M314.5 484.80v0.60M315.0 484.80v0.60M315.5 484.80v0.60M316.0 484.80v0.60M316.5 484.58v1.04M317.0 484.14v1.92M317.5 484.08v2.04M318.0 483.83v2.55M318.5 484.05v2.10M319.0 484.33v1.54M319.5 484.33v1.53M320.0 483.85v2.51M320.5 483.98v2.24M321.0 484.04v2.12M321.5 484.27v1.67M322.0 484.15v1.90M322.5 484.11v1.98M323.0 483.89v2.43M323.5 483.96v2.29M324.0 484.15v1.90M324.5 484.19v1.81M325.0 483.88v2.44M325.5 483.97v2.25M326.0 484.02v2.16M326.5 484.29v1.63M327.0 484.19v1.82M327.5 483.85v2.51M328.0 484.00v2.20M328.5 484.07v2.07M329.0 484.29v1.62M329.5 484.33v1.53M330.0 483.98v2.25M330.5 483.80v2.59M331.0 484.00v2.20M331.5 484.32v1.56M332.0 484.27v1.65M332.5 483.99v2.22M333.0 483.78v2.65M333.5 483.99v2.23M334.0 484.49v1.23M334.5 484.74v0.72M335.0 484.80v0.60M335.5 484.80v0.60M336.0 484.80v0.60M336.5 484.80v0.60M337.0 484.80v0.60M337.5 484.80v0.60M338.0 484.80v0.60M338.5 484.80v0.60M339.0 484.80v0.60M339.5 484.80v0.60M340.0 484.80v0.60M340.5 484.80v0.60M341.0 484.80v0.60M341.5 484.80v0.60M342.0 484.80v0.60M342.5 484.80v0.60M343.0 484.80v0.60M343.5 484.80v0.60M344.0 484.80v0.60M344.5 484.80v0.60M345.0 484.80v0.60M345.5 484.80v0.60M346.0 484.80v0.60M346.5 484.80v0.60M347.0 484.80v0.60M347.5 484.80v0.60M348.0 484.80v0.60M348.5 484.80v0.60M349.0 484.80v0.60M349.5 484.80v0.60M350.0 484.80v0.60M350.5 484.80v0.60M351.0 484.16v1.89M351.5 483.80v2.60M352.0 484.25v1.70M352.5 483.51v3.18M353.0 483.28v3.65M353.5 483.25v3.71M354.0 483.60v2.99M354.5 484.07v2.06M355.0 483.60v3.01M355.5 483.47v3.25M356.0 483.19v3.81M356.5 483.92v2.35M357.0 484.31v1.58M357.5 484.04v2.11M358.0 484.04v2.13M358.5 483.38v3.44M359.0 483.37v3.47M359.5 483.53v3.14M360.0 482.61v4.97M360.5 482.11v5.98M361.0 481.77v6.65M361.5 482.57v5.06M362.0 483.07v4.06M362.5 482.78v4.63M363.0 483.17v3.87M363.5 483.97v2.25M364.0 484.80v0.60M364.5 484.80v0.60M365.0 484.80v0.60M365.5 484.80v0.60M366.0 483.64v2.92M366.5 484.02v2.15M367.0 484.80v0.60M367.5 484.80v0.60M368.0 484.80v0.60M368.5 484.80v0.60M369.0 484.80v0.60M369.5 484.80v0.60M370.0 483.98v2.23M370.5 482.08v6.04M371.0 481.77v6.66M371.5 482.56v5.07M372.0 483.27v3.66M372.5 482.67v4.85M373.0 482.01v6.17M373.5 481.92v6.36M374.0 482.64v4.92M374.5 483.23v3.74M375.0 483.09v4.02M375.5 482.94v4.33M376.0 483.01v4.18M376.5 484.14v1.91M377.0 484.74v0.72M377.5 484.53v1.14M378.0 484.51v1.19M378.5 484.38v1.43M379.0 484.40v1.39M379.5 484.63v0.95M380.0 484.48v1.23M380.5 484.43v1.34M381.0 484.39v1.42M381.5 484.52v1.15M382.0 484.61v0.97M382.5 484.49v1.21M383.0 484.29v1.62M383.5 484.37v1.47M384.0 484.49v1.23M384.5 484.58v1.04M385.0 484.39v1.42M385.5 483.99v2.23M386.0 483.69v2.81M386.5 483.90v2.41M387.0 484.28v1.64M387.5 484.22v1.76M388.0 483.91v2.37M388.5 483.94v2.31M389.0 484.21v1.77M389.5 484.10v2.00M390.0 483.25v3.69M390.5 482.63v4.93M391.0 481.97v6.25M391.5 481.98v6.23M392.0 483.53v3.14M392.5 483.58v3.05M393.0 484.01v2.18M393.5 484.10v1.99M394.0 484.46v1.27M394.5 484.73v0.73M395.0 484.74v0.71M395.5 484.70v0.80M396.0 484.24v1.72M396.5 483.90v2.40M397.0 484.12v1.96M397.5 483.87v2.46M398.0 483.57v3.06M398.5 483.65v2.90M399.0 483.76v2.68M399.5 484.09v2.02M400.0 484.18v1.85M400.5 483.69v2.81M401.0 483.51v3.18M401.5 483.74v2.71M402.0 484.12v1.95M402.5 484.34v1.52M403.0 484.51v1.18M403.5 484.33v1.54M404.0 484.49v1.21M404.5 484.58v1.04M405.0 484.50v1.21M405.5 484.43v1.34M406.0 484.37v1.45M406.5 484.33v1.54M407.0 484.56v1.09M407.5 484.60v1.00M408.0 484.45v1.29M408.5 484.39v1.42M409.0 484.29v1.62M409.5 484.64v0.93M410.0 484.63v0.93M410.5 484.80v0.60" stroke="#666" stroke-width="0.600" fill="none"/></svg>
<div class="a" style="left:413.2px;top:462.5px;width:0.8px;height:109px;background:#aeb8c2;"></div>
<span class="t" style="left:416.90px;top:464.06px;font-size:5.6px;color:#c0c4c8;transform:scaleX(0.9634);">End</span>
<div class="a" style="left:271.2px;top:458px;width:0.8px;height:114px;background:#86bdee;"></div>
<svg class="a" style="left:267.5px;top:456.5px;" width="8" height="5" viewBox="0 0 8 5"><path d="M0.200 0.300H7.400L3.800 4.600Z" fill="#1a81d6"/></svg>
<div class="a" style="left:154.5px;top:571.8px;width:117px;height:11.4px;background:#f0f4f7;"></div>
<div class="a" style="left:272px;top:571.8px;width:530px;height:11.4px;background:#e8ebee;"></div>
<svg class="a" style="left:159.5px;top:573.5px;" width="4" height="6" viewBox="0 0 4 6"><path d="M0.400 0.400L3.400 2.900L0.400 5.400Z" fill="#555"/></svg>
<div class="a" style="left:171.2px;top:574.3px;width:4.3px;height:4.3px;background:#666;"></div>
<div class="a" style="left:182.3px;top:573.5px;width:0.6px;height:7px;background:#dfe4e8;"></div>
<svg class="a" style="left:191.5px;top:575.5px;" width="6" height="4" viewBox="0 0 6 4"><path d="M0.200 3.600L2.800 0.500L5.400 3.600Z" fill="#666"/></svg>
<svg class="a" style="left:203px;top:574.5px;" width="16" height="5" viewBox="0 0 16 5"><path d="M0 2.500h2M5 2.500h9.500" stroke="#666" stroke-width="0.600"/><circle cx="3.500" cy="2.500" r="1.500" fill="#fff" stroke="#555" stroke-width="0.600"/></svg>
<svg class="a" style="left:224px;top:573.8px;" width="13" height="6" viewBox="0 0 13 6"><path d="M0.200 5.400L2.600 2.500L4 4.100L7 0.400L11.800 5.400Z" fill="#666"/></svg>
<span class="t" style="left:245.60px;top:574.61px;font-size:5.9px;color:#555;transform:scaleX(0.9405);">00:05.68</span>
<svg class="a" style="left:275.5px;top:575px;" width="3" height="4" viewBox="0 0 3 4"><path d="M2.500 0.300L0.300 1.800L2.500 3.300Z" fill="#a8b0b8"/></svg>
<svg class="a" style="left:794px;top:575px;" width="3" height="4" viewBox="0 0 3 4"><path d="M0.300 0.300L2.500 1.800L0.300 3.300Z" fill="#a8b0b8"/></svg>
<div class="a" style="left:811.3px;top:97.2px;width:0.8px;height:329.5px;background:#8f959c;"></div>
<div class="a" style="left:811.3px;top:426.7px;width:0.8px;height:155.3px;background:#d5dbe0;"></div>
<div class="a" style="left:812.1px;top:97.2px;width:183.9px;height:20.5px;background:#e9edf0;"></div>
<div class="a" style="left:812.1px;top:97.2px;width:35px;height:20.5px;background:#f0f4f7;"></div>
<div class="a" style="left:902.3px;top:97.2px;width:0.7px;height:20.3px;background:#f2f5f7;"></div>
<div class="a" style="left:980.6px;top:97.2px;width:0.7px;height:20.3px;background:#f2f5f7;"></div>
<svg class="a" style="left:817.5px;top:104px;" width="7" height="7" viewBox="0 0 7 7"><rect x="1.400" y="1.600" width="4.600" height="3.400" fill="none" stroke="#1a81d6" stroke-width="0.800"/><path d="M0.200 2.800h1.200M0.200 4.200h1.200" stroke="#1a81d6" stroke-width="0.700"/><rect x="4.200" y="0.400" width="1.600" height="1.600" fill="#1a81d6"/></svg>
<span class="t" style="left:825.50px;top:103.97px;font-size:7px;color:#1a81d6;transform:scaleX(0.9700);">Slide</span>
<svg class="a" style="left:851.8px;top:103.6px;" width="7" height="7" viewBox="0 0 7 7"><ellipse cx="3.300" cy="3" rx="2.800" ry="2.400" fill="none" stroke="#555" stroke-width="0.700"/><path d="M1.400 4.800L0.600 6.400L2.800 5.400" fill="#555"/></svg>
<span class="t" style="left:861.30px;top:103.97px;font-size:7px;color:#555;transform:scaleX(1.0047);">Comments</span>
<svg class="a" style="left:906.5px;top:103.6px;" width="7" height="7" viewBox="0 0 7 7"><path d="M2.600 1.200Q2.600 3.400 4.800 3.400Q2.600 3.400 2.600 5.600Q2.600 3.400 0.400 3.400Q2.600 3.400 2.600 1.200Z" fill="#444" stroke="#444" stroke-width="0.300"/><path d="M5.400 0.300Q5.400 1.400 6.500 1.400Q5.400 1.400 5.400 2.500Q5.400 1.400 4.300 1.400Q5.400 1.400 5.400 0.300Z" fill="#444"/><path d="M5.400 4.300Q5.400 5.400 6.500 5.400Q5.400 5.400 5.400 6.500Q5.400 5.400 4.300 5.400Q5.400 5.400 5.400 4.300Z" fill="#444"/></svg>
<span class="t" style="left:916.00px;top:103.97px;font-size:7px;color:#555;transform:scaleX(1.0062);">AI Assistant</span>
<div class="a" style="left:957px;top:103.3px;width:19.4px;height:8.7px;background:#9ad9f8;border-radius:1.5px;"></div>
<span class="t" style="left:959.80px;top:104.87px;font-size:6.3px;color:#3f6078;transform:scaleX(1.0494);">Beta</span>
<div class="a" style="left:812.3px;top:117.5px;width:183.7px;height:42px;background:#f0f4f7;"></div>
<span class="t" style="left:823.40px;top:125.06px;font-size:8.2px;color:#5a5a5a;transform:scaleX(0.9775);">Triggers</span>
<svg class="a" style="left:970.3px;top:126.69999999999999px;" width="4.4" height="2.8" viewBox="0 0 4.4 2.8"><path d="M0 0.5599999999999999 L4.4 0.5599999999999999 L2.2 2.52 Z" fill="#98a0a8"/></svg>
<svg class="a" style="left:979.5px;top:125.1px;" width="7" height="7" viewBox="0 0 7 7"><rect x="0.400" y="2" width="5" height="4.200" rx="0.600" fill="#f0f4f7" stroke="#a8b0b8" stroke-width="0.700"/><path d="M1.600 2V0.500H6.300V4.600H5.400" fill="none" stroke="#a8b0b8" stroke-width="0.700"/><path d="M1.600 1.100h4.700" stroke="#a8b0b8" stroke-width="0.900"/></svg>
<svg class="a" style="left:823.2px;top:138.6px;" width="14.3" height="14.1" viewBox="0 0 14.3 14.1"><rect x="0.350" y="0.350" width="13.600000000000001" height="13.400" rx="0.600" fill="#fff" stroke="#d2d7dc" stroke-width="0.700"/><g transform="translate(-0.65,-1) scale(1.18)"><path d="M4 3h3.600l1.800 1.800v5.800H4z" fill="#fff" stroke="#444" stroke-width="0.800"/><path d="M7.600 3v1.800h1.800" fill="none" stroke="#444" stroke-width="0.600"/></g></svg>
<svg class="a" style="left:838.85px;top:138.6px;" width="14.3" height="14.1" viewBox="0 0 14.3 14.1"><rect x="0.350" y="0.350" width="13.600000000000001" height="13.400" rx="0.600" fill="#eef0f2" stroke="#d2d7dc" stroke-width="0.700"/><g transform="translate(-0.65,-1) scale(1.18)"><rect x="3.600" y="3.400" width="5.800" height="6.600" fill="none" stroke="#b8bcc0" stroke-width="0.700"/><path d="M5 8.400L8.600 4.200l0.800 0.800L6 9z" fill="#b8bcc0"/></g></svg>
<svg class="a" style="left:854.5px;top:138.6px;" width="14.3" height="14.1" viewBox="0 0 14.3 14.1"><rect x="0.350" y="0.350" width="13.600000000000001" height="13.400" rx="0.600" fill="#eef0f2" stroke="#d2d7dc" stroke-width="0.700"/><g transform="translate(-0.65,-1) scale(1.18)"><path d="M3.400 3h3.400l1.200 1.200v4.600H3.400z" fill="none" stroke="#b8bcc0" stroke-width="0.700"/><path d="M5.400 5h3l1.200 1.200v4.400H5.400z" fill="#f3f5f7" stroke="#b8bcc0" stroke-width="0.700"/></g></svg>
<svg class="a" style="left:870.15px;top:138.6px;" width="14.3" height="14.1" viewBox="0 0 14.3 14.1"><rect x="0.350" y="0.350" width="13.600000000000001" height="13.400" rx="0.600" fill="#eef0f2" stroke="#d2d7dc" stroke-width="0.700"/><g transform="translate(-0.65,-1) scale(1.18)"><rect x="3.400" y="3.800" width="5" height="6.400" fill="none" stroke="#b8bcc0" stroke-width="0.700"/><rect x="4.800" y="3" width="2.200" height="1.600" fill="#b8bcc0"/><path d="M6 6h3.400v4.600H6z" fill="#f3f5f7" stroke="#b8bcc0" stroke-width="0.700"/></g></svg>
<svg class="a" style="left:885.8px;top:138.6px;" width="14.3" height="14.1" viewBox="0 0 14.3 14.1"><rect x="0.350" y="0.350" width="13.600000000000001" height="13.400" rx="0.600" fill="#eef0f2" stroke="#d2d7dc" stroke-width="0.700"/><g transform="translate(-0.65,-1) scale(1.18)"><path d="M3.800 4.600h5.600l-0.600 6H4.400z" fill="none" stroke="#b8bcc0" stroke-width="0.700"/><path d="M3.200 4.400h6.800M5.400 4.200V3.200h2.400v1" fill="none" stroke="#b8bcc0" stroke-width="0.700"/><path d="M5.800 6v3.400M7.400 6v3.400" stroke="#b8bcc0" stroke-width="0.500"/></g></svg>
<svg class="a" style="left:901.45px;top:138.6px;" width="14.3" height="14.1" viewBox="0 0 14.3 14.1"><rect x="0.350" y="0.350" width="13.600000000000001" height="13.400" rx="0.600" fill="#eef0f2" stroke="#d2d7dc" stroke-width="0.700"/><g transform="translate(-0.65,-1) scale(1.18)"><path d="M5.300 5L6.700 3.400L8.100 5Z" fill="#a4a9ae"/><path d="M5.300 7.800L6.700 9.400L8.100 7.800Z" fill="#a4a9ae"/><path d="M0.900 6.500h11.600" stroke="#d2d7dc" stroke-width="0.600"/></g></svg>
<div class="a" style="left:936px;top:141.3px;width:10px;height:10px;background:#fff;border:0.7px solid #d0d5da;border-radius:0.6px;"></div>
<span class="t" style="left:950.00px;top:142.97px;font-size:6.3px;color:#555;transform:scaleX(1.0394);">Group</span>
<svg class="a" style="left:973.8px;top:138.6px;" width="14" height="14.1" viewBox="0 0 14 14.1"><rect x="0.350" y="0.350" width="13.3" height="13.400" rx="0.600" fill="#fff" stroke="#d2d7dc" stroke-width="0.700"/><g transform="translate(-0.65,-1) scale(1.18)"><rect x="3.600" y="3.400" width="6.600" height="6.400" fill="#f4f6fa" stroke="#4a5058" stroke-width="0.500"/><rect x="3.400" y="3.200" width="7" height="1.700" fill="#3a4047"/><rect x="4.800" y="6" width="4.200" height="2.800" fill="#dfe8fa" stroke="#5a7fd0" stroke-width="0.500"/><path d="M6.300 6.800l1.200 1.200M7.500 6.800l-1.200 1.200" stroke="#3f66c0" stroke-width="0.400"/></g></svg>
<div class="a" style="left:812.3px;top:159.5px;width:183.7px;height:0.6px;background:#e6eaee;"></div>
<div class="a" style="left:812.3px;top:448.3px;width:183.7px;height:20.7px;background:#f0f4f7;"></div>
<svg class="a" style="left:970.3px;top:457.5px;" width="4.4" height="2.8" viewBox="0 0 4.4 2.8"><path d="M0 0.5599999999999999 L4.4 0.5599999999999999 L2.2 2.52 Z" fill="#98a0a8"/></svg>
<svg class="a" style="left:979.5px;top:455.6px;" width="7" height="7" viewBox="0 0 7 7"><rect x="0.400" y="2" width="5" height="4.200" rx="0.600" fill="#f0f4f7" stroke="#a8b0b8" stroke-width="0.700"/><path d="M1.600 2V0.500H6.300V4.600H5.400" fill="none" stroke="#a8b0b8" stroke-width="0.700"/><path d="M1.600 1.100h4.700" stroke="#a8b0b8" stroke-width="0.900"/></svg>
<div class="a" style="left:812.3px;top:519.2px;width:182.5px;height:16.7px;background:#1a81d6;"></div>
<span class="t" style="left:943.00px;top:544.27px;font-size:6.3px;color:#666;font-style:italic;transform:scaleX(0.9011);">(Base Layer)</span>
<svg class="a" style="left:980.9px;top:542.3px;" width="8" height="7" viewBox="0 0 8 7"><path d="M0.500 3.500Q4 0 7.500 3.500Q4 7 0.500 3.500Z" fill="#333"/><circle cx="4" cy="3.300" r="1.100" fill="#fff"/></svg>
<div class="a" style="left:812.3px;top:555.8px;width:183.7px;height:26.4px;background:#f0f4f7;"></div>
<svg class="a" style="left:823.4px;top:563px;" width="13.2" height="13.4" viewBox="0 0 13.2 13.4"><rect x="0.350" y="0.350" width="12.5" height="12.700" rx="0.600" fill="#fff" stroke="#d2d7dc" stroke-width="0.700"/><path d="M3.500 9h6.199999999999999M3.500 10.800h6.199999999999999" stroke="#bbb" stroke-width="0.800"/></svg>
<svg class="a" style="left:839.7px;top:563px;" width="13.5" height="13.4" viewBox="0 0 13.5 13.4"><rect x="0.350" y="0.350" width="12.8" height="12.700" rx="0.600" fill="#fff" stroke="#d2d7dc" stroke-width="0.700"/><path d="M3.500 9h6.5M3.500 10.800h6.5" stroke="#bbb" stroke-width="0.800"/></svg>
<svg class="a" style="left:855.9px;top:563px;" width="13.1" height="13.4" viewBox="0 0 13.1 13.4"><rect x="0.350" y="0.350" width="12.4" height="12.700" rx="0.600" fill="#fff" stroke="#d2d7dc" stroke-width="0.700"/><path d="M3.500 9h6.1M3.500 10.800h6.1" stroke="#bbb" stroke-width="0.800"/></svg>
<svg class="a" style="left:874.7px;top:566px;" width="9" height="8.5" viewBox="0 0 9 8.5"><rect x="0.350" y="0.350" width="8.200" height="7.800" rx="0.600" fill="#f4f6f8" stroke="#d8dce0" stroke-width="0.700"/></svg>
<svg class="a" style="left:977.7px;top:562px;" width="14.5" height="14.5" viewBox="0 0 14.5 14.5"><rect x="0.350" y="0.350" width="13.700" height="13.700" rx="0.800" fill="#fff" stroke="#d8dde2" stroke-width="0.700"/><g transform="translate(3.200,3.200)"><g transform="translate(4,4)"><rect x="-0.55" y="-3.9" width="1.1" height="2" fill="#858b93" transform="rotate(0)"/><rect x="-0.55" y="-3.9" width="1.1" height="2" fill="#858b93" transform="rotate(45)"/><rect x="-0.55" y="-3.9" width="1.1" height="2" fill="#858b93" transform="rotate(90)"/><rect x="-0.55" y="-3.9" width="1.1" height="2" fill="#858b93" transform="rotate(135)"/><rect x="-0.55" y="-3.9" width="1.1" height="2" fill="#858b93" transform="rotate(180)"/><rect x="-0.55" y="-3.9" width="1.1" height="2" fill="#858b93" transform="rotate(225)"/><rect x="-0.55" y="-3.9" width="1.1" height="2" fill="#858b93" transform="rotate(270)"/><rect x="-0.55" y="-3.9" width="1.1" height="2" fill="#858b93" transform="rotate(315)"/><circle r="2.3" fill="none" stroke="#858b93" stroke-width="0.9"/></g></g></svg>
<div class="a" style="left:0px;top:582px;width:998px;height:1px;background:rgba(47,46,52,0.3);"></div>
<span class="t" style="left:5.20px;top:587.07px;font-size:6.3px;color:#c8c8cc;transform:scaleX(0.9422);">Slide 1 of 2</span>
<span class="t" style="left:42.90px;top:587.07px;font-size:6.3px;color:#c8c8cc;transform:scaleX(0.9219);">720 × 540</span>
<span class="t" style="left:77.40px;top:587.07px;font-size:6.3px;color:#c8c8cc;transform:scaleX(0.9544);">"Office_Background"</span>
<svg class="a" style="left:141.5px;top:586.2px;" width="8" height="8" viewBox="0 0 8 8"><circle cx="3.700" cy="3.600" r="3.100" fill="none" stroke="#e0e0e0" stroke-width="0.700"/><path d="M3.700 1.800v2.400M3.700 5v0.900" stroke="#e0e0e0" stroke-width="0.900"/></svg>
<span class="t" style="left:151.10px;top:587.07px;font-size:6.3px;color:#c8c8cc;transform:scaleX(0.9142);">5 Accessibility Issues</span>
<svg class="a" style="left:860.5px;top:586.2px;" width="8" height="7" viewBox="0 0 8 7"><rect x="0.200" y="0.200" width="2.700" height="2.200" fill="#ddd"/><rect x="4" y="0.200" width="2.700" height="2.200" fill="#ddd"/><rect x="0.200" y="3.400" width="2.700" height="2.200" fill="#ddd"/><rect x="4" y="3.400" width="2.700" height="2.200" fill="#ddd"/></svg>
<div class="a" style="left:871px;top:583px;width:12px;height:12.5px;background:#1f1e23;"></div>
<svg class="a" style="left:874px;top:586px;" width="7" height="7" viewBox="0 0 7 7"><rect x="0.300" y="0.300" width="5.600" height="5.400" fill="#ddd"/><rect x="0.900" y="1" width="1.600" height="1.200" fill="#333"/><rect x="0.900" y="2.800" width="1.600" height="1.200" fill="#333"/><rect x="3.200" y="1" width="2.200" height="2" fill="#555"/></svg>
<svg class="a" style="left:886.5px;top:585.8px;" width="8" height="8" viewBox="0 0 8 8"><path d="M0.200 0.600h6.800" stroke="#ddd" stroke-width="0.900"/><path d="M1 1.200h5.200v3H1z" fill="none" stroke="#ddd" stroke-width="0.700"/><path d="M3.600 4.200v1.600M2 6.600L3.600 5.400L5.200 6.600" stroke="#ddd" stroke-width="0.700" fill="none"/></svg>
<span class="t" style="left:897.80px;top:587.12px;font-size:6px;color:#c8c8cc;transform:scaleX(0.9547);">111%</span>
<div class="a" style="left:917.8px;top:589.5px;width:3.4px;height:0.7px;background:#ddd;"></div>
<div class="a" style="left:924px;top:589.5px;width:51.5px;height:0.7px;background:#ddd;"></div>
<svg class="a" style="left:939.5px;top:587.4px;" width="5" height="5" viewBox="0 0 5 5"><circle cx="2.400" cy="2.400" r="1.700" fill="#2f2e34" stroke="#eee" stroke-width="0.800"/></svg>
<div class="a" style="left:950.5px;top:587.9px;width:0.7px;height:4px;background:#ddd;"></div>
<svg class="a" style="left:978px;top:587.4px;" width="5" height="5" viewBox="0 0 5 5"><path d="M0.300 2.400h4.200M2.400 0.300v4.200" stroke="#ddd" stroke-width="0.800"/></svg>
<svg class="a" style="left:986.3px;top:586.2px;" width="8" height="8" viewBox="0 0 8 8"><rect x="0.400" y="0.400" width="6.400" height="6.200" fill="none" stroke="#ddd" stroke-width="0.800"/><path d="M2.600 0.400v6.200M4.600 0.400v6.200M0.400 2.500h6.400M0.400 4.500h6.400" stroke="#2f2e34" stroke-width="1"/><rect x="2.300" y="2.200" width="2.600" height="2.600" fill="#ddd"/></svg>
<div class="a" style="left:682.4px;top:285.3px;width:259.9px;height:287.4px;background:#fff;border:1px solid #a0a6ad;box-shadow:0 1px 3px rgba(0,0,0,.28);"></div>
<div class="a" style="left:683.4px;top:286.3px;width:257.9px;height:22.5px;background:#dfe4e8;"></div>
<span class="t" style="left:693.60px;top:294.07px;font-size:8.3px;color:#56606a;transform:scaleX(0.9588);">Slide Layer Properties</span>
<svg class="a" style="left:926.3px;top:295.6px;" width="5" height="5" viewBox="0 0 5 5"><path d="M0.400 0.400L4.200 4.400M4.200 0.400L0.400 4.400" stroke="#c8cdd2" stroke-width="0.700"/></svg>
<div class="a" style="left:683.4px;top:535.2px;width:257.9px;height:36.4px;background:#f2f4f5;"></div>
<span class="t" style="left:692.30px;top:319.10px;font-size:6.5px;color:#444;font-weight:bold;transform:scaleX(1.0784);">Visibility</span>
<svg class="a" style="left:692.3px;top:330.6px;" width="9.6" height="9.4" viewBox="0 0 9.6 9.4"><rect x="0.350" y="0.350" width="8.800" height="8.600" rx="0.600" fill="#fff" stroke="#d0d5da" stroke-width="0.700"/><path d="M2 4.700L3.900 6.700L7.400 2.400" fill="none" stroke="#1a81d6" stroke-width="1.100"/></svg>
<span class="t" style="left:705.80px;top:332.60px;font-size:6.5px;color:#555;transform:scaleX(1.0574);">Hide other slide layers</span>
<svg class="a" style="left:692.3px;top:342.8px;" width="9.6" height="9.4" viewBox="0 0 9.6 9.4"><rect x="0.350" y="0.350" width="8.800" height="8.600" rx="0.600" fill="#fff" stroke="#d0d5da" stroke-width="0.700"/></svg>
<span class="t" style="left:705.80px;top:344.80px;font-size:6.5px;color:#555;transform:scaleX(1.0567);">Hide objects on the base layer</span>
<svg class="a" style="left:692.3px;top:354.7px;" width="9.6" height="9.4" viewBox="0 0 9.6 9.4"><rect x="0.350" y="0.350" width="8.800" height="8.600" rx="0.600" fill="#fff" stroke="#d0d5da" stroke-width="0.700"/></svg>
<span class="t" style="left:705.80px;top:356.60px;font-size:6.5px;color:#555;transform:scaleX(1.0416);">Hide slide layer when timeline finishes</span>
<span class="t" style="left:691.70px;top:371.70px;font-size:6.5px;color:#555;transform:scaleX(1.0349);">Allow seeking:</span>
<div class="a" style="left:744.9px;top:366.3px;width:186px;height:15.8px;background:#fff;border:0.7px solid #d8dde2;border-radius:0.8px;box-shadow:0 0.700px 0.600px rgba(140,155,170,.55);"></div>
<svg class="a" style="left:919.98px;top:372.96px;" width="4.840000000000001" height="3.08" viewBox="0 0 4.840000000000001 3.08"><path d="M0 0.6160000000000001 L4.840000000000001 0.6160000000000001 L2.4200000000000004 2.7720000000000002 Z" fill="#111"/></svg>
<span class="t" style="left:751.50px;top:371.70px;font-size:6.5px;color:#444;transform:scaleX(1.0417);">Automatically decide</span>
<span class="t" style="left:692.30px;top:392.70px;font-size:6.5px;color:#444;font-weight:bold;transform:scaleX(0.9958);">Behavior</span>
<svg class="a" style="left:722.7px;top:391.6px;" width="8" height="8" viewBox="0 0 8 8"><circle cx="3.800" cy="3.800" r="3.600" fill="#3f93e0"/><circle cx="3.800" cy="3.800" r="2.600" fill="#5aa5e8" stroke="#eaf3fc" stroke-width="0.500"/><path d="M3.800 3.400v2.200" stroke="#fff" stroke-width="1"/><circle cx="3.800" cy="2.300" r="0.600" fill="#fff"/></svg>
<span class="t" style="left:691.70px;top:406.50px;font-size:6.5px;color:#555;transform:scaleX(1.0098);">Present as:</span>
<div class="a" style="left:744.9px;top:401.4px;width:186px;height:15.5px;background:#fff;border:0.7px solid #d8dde2;border-radius:0.8px;box-shadow:0 0.700px 0.600px rgba(140,155,170,.55);"></div>
<svg class="a" style="left:919.98px;top:407.90999999999997px;" width="4.840000000000001" height="3.08" viewBox="0 0 4.840000000000001 3.08"><path d="M0 0.6160000000000001 L4.840000000000001 0.6160000000000001 L2.4200000000000004 2.7720000000000002 Z" fill="#111"/></svg>
<span class="t" style="left:751.50px;top:406.50px;font-size:6.5px;color:#444;transform:scaleX(0.9902);">Layer</span>
<span class="t" style="left:691.70px;top:425.30px;font-size:6.5px;color:#555;transform:scaleX(1.0220);">Label:</span>
<div class="a" style="left:744.9px;top:420.2px;width:186px;height:15.1px;background:#f1f2f3;border:0.7px solid #d8dde2;border-radius:0.8px;box-shadow:0 0.700px 0.600px rgba(140,155,170,.55);"></div>
<svg class="a" style="left:919.98px;top:426.51px;" width="4.840000000000001" height="3.08" viewBox="0 0 4.840000000000001 3.08"><path d="M0 0.6160000000000001 L4.840000000000001 0.6160000000000001 L2.4200000000000004 2.7720000000000002 Z" fill="#b0b5ba"/></svg>
<span class="t" style="left:751.50px;top:425.30px;font-size:6.5px;color:#b8bcc0;transform:scaleX(1.0554);">None</span>
<span class="t" style="left:691.70px;top:443.90px;font-size:6.5px;color:#555;transform:scaleX(1.0635);">Description:</span>
<div class="a" style="left:744.9px;top:439px;width:186px;height:15.5px;background:#f1f2f3;border:0.7px solid #d8dde2;border-radius:0.8px;box-shadow:0 0.700px 0.600px rgba(140,155,170,.55);"></div>
<svg class="a" style="left:919.98px;top:445.51px;" width="4.840000000000001" height="3.08" viewBox="0 0 4.840000000000001 3.08"><path d="M0 0.6160000000000001 L4.840000000000001 0.6160000000000001 L2.4200000000000004 2.7720000000000002 Z" fill="#b0b5ba"/></svg>
<span class="t" style="left:751.50px;top:443.90px;font-size:6.5px;color:#b8bcc0;transform:scaleX(1.0554);">None</span>
<svg class="a" style="left:692.4px;top:464.4px;" width="9.6" height="9.4" viewBox="0 0 9.6 9.4"><rect x="0.350" y="0.350" width="8.800" height="8.600" rx="0.600" fill="#fff" stroke="#d0d5da" stroke-width="0.700"/></svg>
<span class="t" style="left:705.70px;top:467.20px;font-size:6.5px;color:#555;transform:scaleX(1.0569);">Prevent the user from clicking on the other layers</span>
<svg class="a" style="left:692.4px;top:476.4px;" width="9.6" height="9.4" viewBox="0 0 9.6 9.4"><rect x="0.350" y="0.350" width="8.800" height="8.600" rx="0.600" fill="#fff" stroke="#d0d5da" stroke-width="0.700"/></svg>
<span class="t" style="left:705.70px;top:479.10px;font-size:6.5px;color:#555;transform:scaleX(1.0372);">Pause timeline of base layer</span>
<span class="t" style="left:692.70px;top:500.50px;font-size:6.5px;color:#444;font-weight:bold;transform:scaleX(0.9747);">Revisits</span>
<span class="t" style="left:692.20px;top:513.80px;font-size:6.5px;color:#555;transform:scaleX(1.0251);">When revisiting:</span>
<div class="a" style="left:744.9px;top:509.8px;width:186px;height:14.6px;background:#fff;border:0.7px solid #d8dde2;border-radius:0.8px;box-shadow:0 0.700px 0.600px rgba(140,155,170,.55);"></div>
<svg class="a" style="left:919.98px;top:515.86px;" width="4.840000000000001" height="3.08" viewBox="0 0 4.840000000000001 3.08"><path d="M0 0.6160000000000001 L4.840000000000001 0.6160000000000001 L2.4200000000000004 2.7720000000000002 Z" fill="#111"/></svg>
<span class="t" style="left:752.00px;top:513.80px;font-size:6.5px;color:#444;transform:scaleX(1.0316);">Automatically decide</span>
<svg class="a" style="left:693.4px;top:549.2px;" width="10" height="10" viewBox="0 0 10 10"><circle cx="5" cy="5" r="4.300" fill="none" stroke="#444" stroke-width="0.800"/><path d="M5 4.300v3" stroke="#444" stroke-width="1"/><circle cx="5" cy="2.900" r="0.600" fill="#444"/></svg>
<span class="t" style="left:705.70px;top:551.81px;font-size:6.6px;color:#555;transform:scaleX(0.9421);">LEARN MORE...</span>
<div class="a" style="left:892.5px;top:544.6px;width:39px;height:19px;background:#1a81d6;border-radius:9.5px;"></div>
<span class="t" style="left:901.00px;top:551.97px;font-size:6.3px;color:#fff;font-weight:bold;transform:scaleX(0.9676);">CLOSE</span>
<svg class="a" style="left:677.4px;top:470.1px;" width="51.4" height="22.8" viewBox="0 0 51.4 22.8"><rect x="0.85" y="0.85" width="49.7" height="21.1" fill="none" stroke="#f02a2c" stroke-width="1.7"/></svg>
<svg class="a" style="left:966.7px;top:547.3px;" width="31.3" height="35.8" viewBox="0 0 31.3 35.8"><rect x="0.85" y="0.85" width="29.6" height="34.1" fill="none" stroke="#f02a2c" stroke-width="1.7"/></svg>
</body></html>
